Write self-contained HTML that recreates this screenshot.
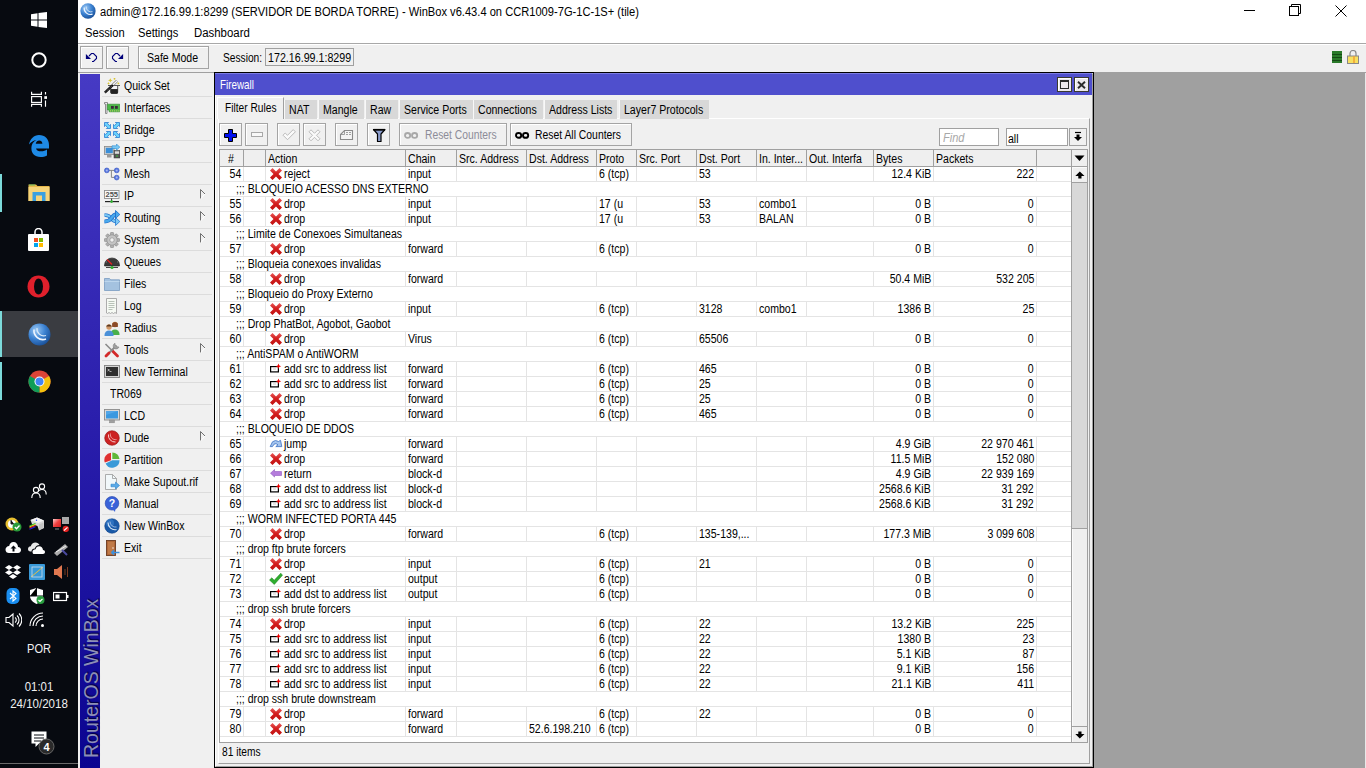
<!DOCTYPE html>
<html><head><meta charset="utf-8">
<style>
*{margin:0;padding:0;box-sizing:border-box}
html,body{width:1366px;height:768px;overflow:hidden;background:#fff;font-family:"Liberation Sans",sans-serif;color:#000}
.a{position:absolute}
.tx{position:absolute;white-space:nowrap;line-height:14px}
.btn{position:absolute;background:#f0f0f0;border:1px solid #a4a4a4;box-shadow:inset 1px 1px 0 #fff}
.it{position:absolute;left:102px;width:110px;height:1px;background:#dcdcdc}
.r{position:absolute;left:220px;width:851px;height:15px;border-bottom:1px solid #e4e4e4}
.c{position:absolute;top:0;height:14px;width:1px;background:#e4e4e4}
.ic{position:absolute;top:0px}
.tab{position:absolute;top:100px;height:19px;background:#d8d8d8;border-left:1px solid #f8f8f8}
.tbtn{position:absolute;top:123px;height:23px;background:#f0f0f0;border:1px solid #a4a4a4;box-shadow:inset 1px 1px 0 #fff}
</style></head><body>

<div class="a" style="left:0;top:0;width:78px;height:768px;background:#070a10"></div>
<svg class="a" style="left:31px;top:12px" width="16" height="16"><path d="M0 2.2L6.5 1.3V7.5H0Z M7.5 1.1L16 0V7.5H7.5Z M0 8.5H6.5V14.7L0 13.8Z M7.5 8.5H16V16L7.5 14.9Z" fill="#fff"/></svg>
<svg class="a" style="left:31px;top:52px" width="16" height="16"><circle cx="8" cy="8" r="6.7" fill="none" stroke="#fff" stroke-width="2"/></svg>
<svg class="a" style="left:26px;top:86px" width="26" height="26"><g fill="none" stroke="#fff" stroke-width="1.15"><path d="M5.6 5.8V8.3H15.4V5.8"/><rect x="5.6" y="10.6" width="9.8" height="5.8"/><path d="M5.6 20.8V18.4H15.4V20.8"/><path d="M19.5 6V8.6M19.5 14.4V20.8"/></g><rect x="18.3" y="10.2" width="2.7" height="2.7" fill="#fff"/></svg>
<svg class="a" style="left:24px;top:130px" width="30" height="30"><path fill-rule="evenodd" fill="#1e8ae6" d="M5 14.5C6 9 10 5 15 5C21 5 25 9 25 15L25 18.4H12C12.5 20.5 14.5 21.3 17 21.3C19.5 21.3 21.5 20.5 23 19.5L23 25.4C21 26.5 19 27 16.5 27C10.5 27 7.4 23 7.4 18.5C7.4 14 9.5 11.2 12.5 10.2C9.5 10.3 7 12 5 14.5Z M11.7 13.7C12.3 11.8 13.6 10.6 15.2 10.6C16.9 10.6 18.2 11.8 18.4 13.7Z"/></svg>
<div class="a" style="left:0;top:174px;width:2px;height:38px;background:#7cdada"></div>
<svg class="a" style="left:28px;top:183px" width="22" height="19" viewBox="0 0 22 19"><path d="M0.5 1.5H8L9.5 3H21.5V18H0.5Z" fill="#e8b84a"/><path d="M0.5 4H21.5V18H0.5Z" fill="#f6d47a"/><path d="M4.5 9H17.5V18H14V12.5H8V18H4.5Z" fill="#3aa0e0"/><path d="M1 2H7" stroke="#6ac060" stroke-width="1"/></svg>
<svg class="a" style="left:27px;top:228px" width="23" height="23" viewBox="0 0 23 23"><path d="M8 6V4A3.5 3.5 0 0 1 15 4V6" fill="none" stroke="#fff" stroke-width="1.5"/><rect x="1" y="6" width="21" height="17" rx="1" fill="#fff"/><rect x="7" y="10" width="4" height="4" fill="#f25022"/><rect x="12" y="10" width="4" height="4" fill="#7fba00"/><rect x="7" y="15" width="4" height="4" fill="#00a4ef"/><rect x="12" y="15" width="4" height="4" fill="#ffb900"/></svg>
<svg class="a" style="left:27px;top:275px" width="23" height="23" viewBox="0 0 23 23"><ellipse cx="11.5" cy="11.5" rx="11" ry="11" fill="#e0202c"/><ellipse cx="11.5" cy="11.5" rx="4.5" ry="8" fill="#070a10"/></svg>
<div class="a" style="left:0;top:311px;width:78px;height:46px;background:#3a3c41"></div>
<div class="a" style="left:0;top:311px;width:2px;height:46px;background:#7cdada"></div>
<svg class="a" style="left:28px;top:323px" width="23" height="23" viewBox="0 0 23 23"><defs><radialGradient id="wb" cx="35%" cy="30%" r="75%"><stop offset="0" stop-color="#9ac8f4"/><stop offset="0.55" stop-color="#3a80d0"/><stop offset="1" stop-color="#1a5098"/></radialGradient></defs><circle cx="11.5" cy="11.5" r="11" fill="url(#wb)"/><path d="M6 6.5A9 9 0 0 0 18 16" stroke="#f0f6ff" stroke-width="1.6" fill="none"/><path d="M9 5A7 7 0 0 0 18 12.5" stroke="#d8e8f8" stroke-width="1.2" fill="none"/></svg>
<div class="a" style="left:0;top:362px;width:2px;height:38px;background:#7cdada"></div>
<svg class="a" style="left:28px;top:370px" width="23" height="23" viewBox="0 0 23 23"><circle cx="11.5" cy="11.5" r="11" fill="#db4437"/><path d="M11.5 11.5L21.03 6 A11 11 0 0 1 11.5 22.5Z" fill="#f4c20d"/><path d="M11.5 11.5L11.5 22.5A11 11 0 0 1 1.97 6Z" fill="#0f9d58"/><circle cx="11.5" cy="11.5" r="5" fill="#fff"/><circle cx="11.5" cy="11.5" r="4" fill="#4285f4"/></svg>
<svg class="a" style="left:31px;top:483px" width="16" height="16"><circle cx="5" cy="7" r="2.6" fill="none" stroke="#fff" stroke-width="1.1"/><path d="M0.8 15C0.8 11.5 2.5 10 5 10C7.5 10 9.2 11.5 9.2 15" fill="none" stroke="#fff" stroke-width="1.1"/><circle cx="11" cy="3.5" r="2.6" fill="none" stroke="#fff" stroke-width="1.1"/><path d="M8 7.5C9 6.7 10 6.5 11 6.5C13.5 6.5 15.2 8 15.2 11.5" fill="none" stroke="#fff" stroke-width="1.1"/></svg>
<svg class="a" style="left:5px;top:516px" width="17" height="16"><circle cx="7" cy="8" r="6.5" fill="#e8c030"/><circle cx="7" cy="8" r="4" fill="#fff"/><path d="M6 4V8H9" stroke="#222" stroke-width="1"/><circle cx="12" cy="11" r="4.5" fill="#2a9a3a"/><path d="M9.8 11L11.5 12.7L14.5 9.5" stroke="#fff" stroke-width="1.3" fill="none"/></svg>
<svg class="a" style="left:29px;top:516px" width="16" height="16"><path d="M1.5 4L8 1.5L15 4.5V12L10 14.5L8.5 10L3 8Z" fill="#d8d8d8"/><path d="M1.5 4L8 1.5L15 4.5L9 7Z" fill="#f4f4f4"/><circle cx="7.5" cy="4.2" r="0.7" fill="#2040f0"/><path d="M10 8.5L14.5 6.5V12L10 14Z" fill="#c4c4c4"/><g stroke-width="1.1"><path d="M0.5 10L6.5 7.5" stroke="#30c030"/><path d="M0.5 11L6.5 8.5" stroke="#e8e020"/><path d="M0.5 12L6.5 9.5" stroke="#e02020"/><path d="M0.5 13.3L6.5 10.8" stroke="#2020e0"/></g></svg>
<svg class="a" style="left:52px;top:516px" width="18" height="16"><defs><linearGradient id="rm" x1="0" y1="0" x2="1" y2="1"><stop offset="0" stop-color="#fbd0d0"/><stop offset="0.5" stop-color="#f04040"/><stop offset="1" stop-color="#d02020"/></linearGradient></defs><rect x="1" y="3" width="8" height="8" fill="url(#rm)"/><path d="M3 13H7" stroke="#888" stroke-width="1"/><rect x="10" y="1" width="7" height="7" fill="#a8a8a8"/><circle cx="13.8" cy="12.9" r="3.2" fill="#e02020"/><path d="M12 14.5L15.5 11.3" stroke="#fff" stroke-width="1.1"/></svg>
<svg class="a" style="left:5px;top:541px" width="16" height="14"><path d="M4 12H13C15 12 16 10.5 16 9C16 7.5 15 6 13 6C13 3 11 1 8.5 1C6 1 4.5 3 4.2 5C2 5 0.5 6.8 0.5 8.7C0.5 10.7 2 12 4 12Z" fill="#fff"/><path d="M8.5 4.5L5.5 7.5H7.5V10.5H9.5V7.5H11.5Z" fill="#070a10"/></svg>
<svg class="a" style="left:28px;top:541px" width="17" height="14"><path d="M2.5 10.5C0.8 10.5 0 9.3 0 8C0 6.5 1.2 5.3 2.8 5.3C3.3 3 5.2 1.5 7.5 1.5C9.3 1.5 10.8 2.5 11.5 4C9 4.2 7.3 5.5 6.8 7.5C5 7.5 3.5 8.8 3.5 10.5Z" fill="#e8e8e8"/><path d="M5.5 13H15C16.2 13 17 12.1 17 11C17 9.8 16.1 9 15 9C14.8 6.8 13.2 5.3 11.2 5.3C9.4 5.3 8 6.5 7.6 8.2C6 8.2 4.5 9.2 4.5 10.8C4.5 12 5 13 5.5 13Z" fill="#fff"/></svg>
<svg class="a" style="left:53px;top:541px" width="16" height="16"><path d="M1 12L12 3L15 6L4 15Z" fill="#aaa"/><path d="M3 11L13 5" stroke="#eee"/><path d="M9 9L14 14" stroke="#4a4aa0" stroke-width="2"/></svg>
<svg class="a" style="left:5px;top:564px" width="16" height="16"><path d="M4 1L8 3.5L4 6L0 3.5Z M12 1L16 3.5L12 6L8 3.5Z M4 6L8 8.5L4 11L0 8.5Z M12 6L16 8.5L12 11L8 8.5Z M8 10L12 12.5L8 15L4 12.5Z" fill="#fff"/></svg>
<svg class="a" style="left:29px;top:564px" width="16" height="16"><rect x="0" y="0" width="16" height="16" rx="1" fill="#3a9ad8"/><path d="M2 13L14 3" stroke="#e8c040" stroke-width="1"/><rect x="3" y="3" width="10" height="10" fill="none" stroke="#cde" stroke-width="0.8"/></svg>
<svg class="a" style="left:53px;top:564px" width="16" height="16"><path d="M1 5H4L9 1V15L4 11H1Z" fill="#e07850"/><path d="M12 5V11M14.5 3V13" stroke="#7a3a20" stroke-width="1"/></svg>
<svg class="a" style="left:5px;top:588px" width="16" height="16"><rect x="1.5" y="0" width="13" height="16" rx="5" fill="#1a8ef0"/><path d="M5 5L11 10.5L8 13V3L11 5.5L5 11" fill="none" stroke="#fff" stroke-width="1.1"/></svg>
<svg class="a" style="left:29px;top:588px" width="16" height="16"><path d="M1 2L7.5 0L14 2V8C14 11.5 11 14.5 7.5 16C4 14.5 1 11.5 1 8Z" fill="#fff"/><path d="M7.5 0V8H1M7.5 8H14" stroke="#070a10" stroke-width="1"/><circle cx="11.5" cy="12" r="4" fill="#2aa040"/><path d="M9.5 12L11 13.5L13.5 10.8" stroke="#fff" stroke-width="1.2" fill="none"/></svg>
<svg class="a" style="left:53px;top:590px" width="16" height="12"><rect x="0.5" y="2.5" width="13" height="8" fill="none" stroke="#fff" stroke-width="1.2"/><rect x="2.5" y="4.5" width="4" height="4" fill="#fff"/><rect x="14" y="5" width="1.5" height="3" fill="#fff"/></svg>
<svg class="a" style="left:5px;top:612px" width="17" height="16"><path d="M1 5.5H4L8 2V14L4 10.5H1Z" fill="none" stroke="#fff" stroke-width="1.1"/><path d="M10 5.5A3 3 0 0 1 10 10.5M12 3.5A6 6 0 0 1 12 12.5M14 1.5A9 9 0 0 1 14 14.5" fill="none" stroke="#fff" stroke-width="1.1"/></svg>
<svg class="a" style="left:29px;top:612px" width="16" height="16"><path d="M1 14A13 13 0 0 1 14 1M4 14A10 10 0 0 1 14 4M7 14A7 7 0 0 1 14 7" fill="none" stroke="#fff" stroke-width="1.1"/><circle cx="13.5" cy="13.5" r="1.5" fill="#fff"/></svg>
<div class="tx" style="left:0;width:78px;text-align:center;top:642px;font-size:12px;color:#f0f0f0;transform:scaleX(0.92)">POR</div>
<div class="tx" style="left:0;width:78px;text-align:center;top:680px;font-size:12px;color:#f0f0f0;transform:scaleX(0.95)">01:01</div>
<div class="tx" style="left:0;width:78px;text-align:center;top:697px;font-size:12px;color:#f0f0f0;transform:scaleX(0.96)">24/10/2018</div>
<svg class="a" style="left:30px;top:730px" width="26" height="26"><path d="M1.5 1.5H16.5V13.5H9L5.5 17V13.5H1.5Z" fill="#fff"/><path d="M4 5H14M4 8H14M4 11H11" stroke="#070a10" stroke-width="1"/><circle cx="16.5" cy="16.5" r="7.5" fill="#2a2a2a" stroke="#666" stroke-width="1"/><text x="16.5" y="21" font-size="11" font-weight="bold" text-anchor="middle" fill="#fff" font-family="Liberation Sans">4</text></svg>
<div class="a" style="left:0;top:763px;width:78px;height:1px;background:#6a6a6a"></div>
<div class="a" style="left:78px;top:0;width:1288px;height:43px;background:#fff"></div>
<div class="a" style="left:78px;top:43px;width:1288px;height:1px;background:#a8a8a8"></div>
<div class="a" style="left:78px;top:44px;width:1288px;height:28px;background:#f0f0f0;border-top:1px solid #fff"></div>
<svg class="a" style="left:80px;top:3px" width="16" height="16" viewBox="0 0 23 23"><circle cx="11.5" cy="11.5" r="11" fill="url(#wb)"/><path d="M6 6.5A9 9 0 0 0 18 16" stroke="#f0f6ff" stroke-width="1.6" fill="none"/><path d="M9 5A7 7 0 0 0 18 12.5" stroke="#d8e8f8" stroke-width="1.2" fill="none"/></svg>
<div class="tx" style="left:100px;top:5px;font-size:12px;transform:scaleX(0.927);transform-origin:0 0;">admin@172.16.99.1:8299 (SERVIDOR DE BORDA TORRE) - WinBox v6.43.4 on CCR1009-7G-1C-1S+ (tile)</div>
<div class="tx" style="left:85px;top:26px;font-size:12px;transform:scaleX(0.93);transform-origin:0 0;">Session</div>
<div class="tx" style="left:138px;top:26px;font-size:12px;transform:scaleX(0.93);transform-origin:0 0;">Settings</div>
<div class="tx" style="left:194px;top:26px;font-size:12px;transform:scaleX(0.95);transform-origin:0 0;">Dashboard</div>
<div class="a" style="left:1244px;top:10px;width:11px;height:1px;background:#000"></div>
<svg class="a" style="left:1289px;top:4px" width="12" height="12"><path d="M2.5 2.5V0.5H11.5V9.5H9.5" fill="none" stroke="#000"/><rect x="0.5" y="2.5" width="9" height="9" fill="none" stroke="#000"/></svg>
<svg class="a" style="left:1335px;top:5px" width="12" height="12"><path d="M0.5 0.5L11.5 11.5M11.5 0.5L0.5 11.5" stroke="#000" stroke-width="1"/></svg>
<div class="btn" style="left:80px;top:46px;width:23px;height:23px"></div>
<div class="btn" style="left:106px;top:46px;width:23px;height:23px"></div>
<svg class="a" style="left:80px;top:46px" width="50" height="23"><g transform="translate(-80 -46)"><path d="M89 56L91.5 53.5H93.5L96.5 56.5V58.5L93.5 61.5H92" fill="none" stroke="#00007a" stroke-width="1.1"/><path d="M85.9 53.9V58.9H91Z" fill="#00007a"/><path d="M120 56L117.5 53.5H115.5L112.5 56.5V58.5L115.5 61.5H117" fill="none" stroke="#00007a" stroke-width="1.1"/><path d="M123.1 53.9V58.9H118Z" fill="#00007a"/></g></svg>
<div class="btn" style="left:138px;top:46px;width:71px;height:23px"></div>
<div class="tx" style="left:147px;top:51px;font-size:12px;transform:scaleX(0.88);transform-origin:0 0;">Safe Mode</div>
<div class="tx" style="left:223px;top:51px;font-size:12px;transform:scaleX(0.85);transform-origin:0 0;">Session:</div>
<div class="a" style="left:265px;top:48px;width:89px;height:18px;background:#f0f0f0;border:1px solid #a0a0a0"></div>
<div class="tx" style="left:268px;top:51px;font-size:12px;transform:scaleX(0.89);transform-origin:0 0;">172.16.99.1:8299</div>
<svg class="a" style="left:1332px;top:51px" width="10" height="12"><rect x="0" y="0" width="10" height="12" fill="#2a7a2a"/><path d="M0 3.5H10M0 6.5H10M0 9.5H10" stroke="#154a15"/></svg>
<svg class="a" style="left:1347px;top:50px" width="12" height="14"><path d="M3 6V3.5A3 3 0 0 1 9 3.5V6" fill="none" stroke="#888" stroke-width="1.2"/><rect x="0.5" y="6" width="11" height="7.5" fill="#f8e060" stroke="#888"/><path d="M7 6V13" stroke="#f0a030" stroke-width="1.5"/></svg>
<div class="a" style="left:78px;top:72px;width:1288px;height:1px;background:#a0a0a0"></div>
<div class="a" style="left:78px;top:73px;width:136px;height:695px;background:#f0f0f0"></div>
<div class="a" style="left:80px;top:74px;width:20px;height:694px;background:linear-gradient(#463ac4,#2a1eac 50%,#0a0490)"></div>
<div class="tx" style="left:82px;top:758px;transform-origin:0 0;transform:rotate(-90deg);font-size:19.5px;line-height:18px;color:#8c8eb8;text-shadow:1px 1px 1px #000040">RouterOS WinBox</div>
<div class="it" style="top:96px"></div>
<svg class="a" style="left:104px;top:78px" width="16" height="16" viewBox="0 0 16 16"><path d="M6.6 8H13.9V14.5Q13.9 15.7 12.5 15.7H8Q6.6 15.7 6.6 14.5Z" fill="#3c3c3c"/><path d="M6.6 11.5H13.9V14.5Q13.9 15.7 12.5 15.7H8Q6.6 15.7 6.6 14.5Z" fill="#222"/><rect x="6.8" y="8" width="7" height="3" fill="#f4f4f8"/><path d="M6.8 8V14.5M13.7 8V14.5" stroke="#333" stroke-width="0.8"/><path d="M4 7.5H16" stroke="#555" stroke-width="1"/><path d="M0.8 14.6L9 6.8" stroke="#111" stroke-width="2.4"/><path d="M9 6.8L13 2.9" stroke="#777" stroke-width="2.6"/><path d="M9 6.8L13 2.9" stroke="#fafafa" stroke-width="1.4"/><path d="M1.5 14L8.5 7.3" stroke="#bbb" stroke-width="0.6" stroke-dasharray="1 1"/><path d="M6.3 0.3L7 1.8L8.6 2.4L7 3L6.3 4.6L5.6 3L4 2.4L5.6 1.8Z" fill="#d8c432"/><path d="M4.5 4L5 5L6 5.3L5 5.7L4.5 6.7L4 5.7L3 5.3L4 5Z" fill="#d8c432"/><circle cx="10.5" cy="0.8" r="0.9" fill="#d8c432"/><circle cx="14.4" cy="5.4" r="0.9" fill="#d8c432"/></svg>
<div class="tx" style="left:124px;top:79px;font-size:12px;transform:scaleX(0.88);transform-origin:0 0;">Quick Set</div>
<div class="it" style="top:118px"></div>
<svg class="a" style="left:104px;top:100px" width="16" height="16" viewBox="0 0 16 16"><path d="M0.5 2.5H3.5V4H3V13.5H1.5V4H0.5Z" fill="#f0f0f4" stroke="#777" stroke-width="0.8"/><path d="M3.5 4.2H15.8V11.8H5.2V10H3.5Z" fill="#4cb848" stroke="#2a8a2a" stroke-width="0.6"/><rect x="7" y="6" width="2.8" height="2.8" fill="#3a2a3a"/><rect x="11" y="6" width="2.8" height="2.8" fill="#3a2a3a"/><path d="M6 10.9H15.5" stroke="#e8d070" stroke-width="1" stroke-dasharray="0.9 1.2"/></svg>
<div class="tx" style="left:124px;top:101px;font-size:12px;transform:scaleX(0.88);transform-origin:0 0;">Interfaces</div>
<div class="it" style="top:140px"></div>
<svg class="a" style="left:104px;top:122px" width="16" height="16" viewBox="0 0 16 16"><g fill="#6cd4fc" stroke="#2a7ad0" stroke-width="0.8" stroke-linejoin="round"><path d="M0.5 0.5H4.6L3.5 1.6L5.4 3.5L6.5 2.4V6.5H2.4L3.5 5.4L1.6 3.5L0.5 4.6Z"/><path transform="translate(16 0) scale(-1 1)" d="M0.5 0.5H4.6L3.5 1.6L5.4 3.5L6.5 2.4V6.5H2.4L3.5 5.4L1.6 3.5L0.5 4.6Z"/><path transform="translate(0 16) scale(1 -1)" d="M0.5 0.5H4.6L3.5 1.6L5.4 3.5L6.5 2.4V6.5H2.4L3.5 5.4L1.6 3.5L0.5 4.6Z"/><path transform="translate(16 16) scale(-1 -1)" d="M0.5 0.5H4.6L3.5 1.6L5.4 3.5L6.5 2.4V6.5H2.4L3.5 5.4L1.6 3.5L0.5 4.6Z"/></g></svg>
<div class="tx" style="left:124px;top:123px;font-size:12px;transform:scaleX(0.88);transform-origin:0 0;">Bridge</div>
<div class="it" style="top:162px"></div>
<svg class="a" style="left:104px;top:144px" width="16" height="16" viewBox="0 0 16 16"><rect x="0.5" y="2.5" width="9.5" height="8" fill="#d0d0d0" stroke="#888" stroke-width="0.8"/><rect x="1.8" y="3.8" width="7" height="5.4" fill="#3a8ed8"/><rect x="3" y="11" width="4.5" height="2.5" fill="#999"/><rect x="10" y="6.5" width="6" height="7.5" fill="#555" stroke="#333" stroke-width="0.5"/><rect x="10.8" y="7.3" width="4.4" height="2.5" fill="#ddd"/><circle cx="13" cy="12" r="0.8" fill="#3c3"/><path d="M8 1.8H12.5V0L15.8 3.1L12.5 6.2V4.5H8Z" fill="#7ac8f4" stroke="#2a8ad0" stroke-width="0.6"/></svg>
<div class="tx" style="left:124px;top:145px;font-size:12px;transform:scaleX(0.88);transform-origin:0 0;">PPP</div>
<div class="it" style="top:184px"></div>
<svg class="a" style="left:104px;top:166px" width="16" height="16" viewBox="0 0 16 16"><path d="M3 4.4H12.5M7.4 4.4V11.4H12.5" stroke="#888" stroke-width="1" fill="none"/><circle cx="2.8" cy="4.4" r="2.4" fill="#5a78e0" stroke="#3050c0" stroke-width="0.6"/><circle cx="12.7" cy="4.4" r="2.4" fill="#5a78e0" stroke="#3050c0" stroke-width="0.6"/><circle cx="12.7" cy="11.6" r="2.4" fill="#5a78e0" stroke="#3050c0" stroke-width="0.6"/><circle cx="2.8" cy="4.4" r="1" fill="#a8b8f0"/><circle cx="12.7" cy="4.4" r="1" fill="#a8b8f0"/><circle cx="12.7" cy="11.6" r="1" fill="#a8b8f0"/></svg>
<div class="tx" style="left:124px;top:167px;font-size:12px;transform:scaleX(0.88);transform-origin:0 0;">Mesh</div>
<div class="it" style="top:206px"></div>
<svg class="a" style="left:104px;top:188px" width="16" height="16" viewBox="0 0 16 16"><rect x="0.5" y="2.5" width="14.5" height="8" fill="#fafafa" stroke="#909090" stroke-width="0.9"/><text x="7.8" y="9.3" font-size="7.5" font-weight="bold" text-anchor="middle" fill="#505050" font-family="Liberation Sans">255</text><path d="M7.6 10.5V13.5" stroke="#333"/><path d="M1 13.6H15" stroke="#222" stroke-width="1.2"/><circle cx="7.6" cy="13.6" r="1.4" fill="#30b030"/></svg>
<div class="tx" style="left:124px;top:189px;font-size:12px;transform:scaleX(0.88);transform-origin:0 0;">IP</div>
<svg class="a" style="left:200px;top:189px" width="7" height="11"><path d="M0.5 0.5V10" stroke="#707070"/><path d="M0.5 0.5L5 5" stroke="#707070"/><path d="M5 5L0.5 10" stroke="#fff"/></svg>
<div class="it" style="top:228px"></div>
<svg class="a" style="left:104px;top:210px" width="16" height="16" viewBox="0 0 16 16"><path d="M0.5 5C4 5 5.5 5.5 7.5 8.5C9.5 11.5 10.5 11.5 12 11.5" stroke="#2a7ad0" stroke-width="3.6" fill="none"/><path d="M0.5 5C4 5 5.5 5.5 7.5 8.5C9.5 11.5 10.5 11.5 12 11.5" stroke="#7cc8f4" stroke-width="2.2" fill="none"/><path d="M11.5 7.5L15.8 11.5L11.5 15.5Z" fill="#7cc8f4" stroke="#2a7ad0" stroke-width="0.8" stroke-linejoin="round"/><path d="M0.5 11.5C4 11.5 5.5 11 7.5 8C9.5 5 10.5 4.5 12 4.5" stroke="#1a6ac8" stroke-width="3.8" fill="none"/><path d="M0.5 11.5C4 11.5 5.5 11 7.5 8C9.5 5 10.5 4.5 12 4.5" stroke="#4aa8ec" stroke-width="2.4" fill="none"/><path d="M11.5 0.5L15.8 4.5L11.5 8.5Z" fill="#4aa8ec" stroke="#1a6ac8" stroke-width="0.8" stroke-linejoin="round"/></svg>
<div class="tx" style="left:124px;top:211px;font-size:12px;transform:scaleX(0.88);transform-origin:0 0;">Routing</div>
<svg class="a" style="left:200px;top:211px" width="7" height="11"><path d="M0.5 0.5V10" stroke="#707070"/><path d="M0.5 0.5L5 5" stroke="#707070"/><path d="M5 5L0.5 10" stroke="#fff"/></svg>
<div class="it" style="top:250px"></div>
<svg class="a" style="left:104px;top:232px" width="16" height="16" viewBox="0 0 16 16"><g transform="translate(8 8)"><g fill="#b0b0b0" stroke="#888" stroke-width="0.6"><rect x="-1.6" y="-7.5" width="3.2" height="15" rx="0.6"/><rect x="-1.6" y="-7.5" width="3.2" height="15" rx="0.6" transform="rotate(45)"/><rect x="-1.6" y="-7.5" width="3.2" height="15" rx="0.6" transform="rotate(90)"/><rect x="-1.6" y="-7.5" width="3.2" height="15" rx="0.6" transform="rotate(135)"/></g><circle r="5.2" fill="#c4c4c4" stroke="#8a8a8a" stroke-width="0.6"/><circle r="2.2" fill="#f0f0f0" stroke="#888" stroke-width="0.6"/></g></svg>
<div class="tx" style="left:124px;top:233px;font-size:12px;transform:scaleX(0.88);transform-origin:0 0;">System</div>
<svg class="a" style="left:200px;top:233px" width="7" height="11"><path d="M0.5 0.5V10" stroke="#707070"/><path d="M0.5 0.5L5 5" stroke="#707070"/><path d="M5 5L0.5 10" stroke="#fff"/></svg>
<div class="it" style="top:272px"></div>
<svg class="a" style="left:104px;top:254px" width="16" height="16" viewBox="0 0 16 16"><path d="M0.5 11A7.5 7 0 0 1 15.5 11V12H0.5Z" fill="#3a3a3a" stroke="#222" stroke-width="0.6"/><path d="M3 5.5L8 10.5" stroke="#e82020" stroke-width="1.3"/><path d="M2 8H3M8 3.5V4.5M13 8H14" stroke="#999" stroke-width="0.7"/><path d="M2 13.5H14" stroke="#444" stroke-width="1"/><circle cx="8" cy="13.5" r="1.6" fill="#30b030"/></svg>
<div class="tx" style="left:124px;top:255px;font-size:12px;transform:scaleX(0.88);transform-origin:0 0;">Queues</div>
<div class="it" style="top:294px"></div>
<svg class="a" style="left:104px;top:276px" width="16" height="16" viewBox="0 0 16 16"><path d="M0.5 2.5H5.5L6.8 3.8H15.5V14.5H0.5Z" fill="#a4c2e0" stroke="#7a9cc0" stroke-width="0.8"/><path d="M0.5 5.5H15.5" stroke="#c4daf0" stroke-width="0.8"/></svg>
<div class="tx" style="left:124px;top:277px;font-size:12px;transform:scaleX(0.88);transform-origin:0 0;">Files</div>
<div class="it" style="top:316px"></div>
<svg class="a" style="left:104px;top:298px" width="16" height="16" viewBox="0 0 16 16"><path d="M2.5 0.5H12.5V15.5L11 14.5L9.5 15.5L8 14.5L6.5 15.5L5 14.5L3.5 15.5L2.5 15Z" fill="#f6faf4" stroke="#999" stroke-width="0.8"/><path d="M4.5 3.5H10.5M4.5 5.5H10.5M4.5 7.5H10.5M4.5 9.5H10.5M4.5 11.5H8.5" stroke="#a8b4a8" stroke-width="0.8"/></svg>
<div class="tx" style="left:124px;top:299px;font-size:12px;transform:scaleX(0.88);transform-origin:0 0;">Log</div>
<div class="it" style="top:338px"></div>
<svg class="a" style="left:104px;top:320px" width="16" height="16" viewBox="0 0 16 16"><circle cx="11" cy="4.5" r="2.8" fill="#c08850"/><path d="M8.2 3.5Q11 0.5 13.8 3.5V7H8.2Z" fill="#8a4a28"/><path d="M6.5 14A4.5 4.5 0 0 1 15.5 14V15H6.5Z" fill="#4ab04a"/><circle cx="5" cy="7" r="2.7" fill="#d09868"/><path d="M2.3 6Q5 3 7.7 6V6.5H2.3Z" fill="#5a3820"/><path d="M0.5 15A4.5 4.5 0 0 1 9.5 15V16H0.5Z" fill="#4a90d8"/></svg>
<div class="tx" style="left:124px;top:321px;font-size:12px;transform:scaleX(0.88);transform-origin:0 0;">Radius</div>
<div class="it" style="top:360px"></div>
<svg class="a" style="left:104px;top:342px" width="16" height="16" viewBox="0 0 16 16"><path d="M1.5 2L13.5 14" stroke="#8a8a8a" stroke-width="1.6"/><path d="M8.5 9L13.5 14" stroke="#d42a2a" stroke-width="2.8" stroke-linecap="round"/><path d="M12.5 3.5L2 14" stroke="#8a8a8a" stroke-width="1.8"/><path d="M2 14L5 11" stroke="#d42a2a" stroke-width="2.8" stroke-linecap="round"/><path d="M11 1.2A3 3 0 1 0 15 5L13.2 4.8L11.2 2.8Z" fill="#a0a0a0" stroke="#777" stroke-width="0.5"/></svg>
<div class="tx" style="left:124px;top:343px;font-size:12px;transform:scaleX(0.88);transform-origin:0 0;">Tools</div>
<svg class="a" style="left:200px;top:343px" width="7" height="11"><path d="M0.5 0.5V10" stroke="#707070"/><path d="M0.5 0.5L5 5" stroke="#707070"/><path d="M5 5L0.5 10" stroke="#fff"/></svg>
<div class="it" style="top:382px"></div>
<svg class="a" style="left:104px;top:364px" width="16" height="16" viewBox="0 0 16 16"><rect x="0.5" y="1.5" width="15" height="12" fill="#d4d4d4" stroke="#808080" stroke-width="0.9"/><rect x="2" y="3" width="12" height="9" fill="#2e2e2e"/><path d="M3.5 5L5.5 6L3.5 7M5.5 7.5H7.5" stroke="#e0e0e0" stroke-width="0.7" fill="none"/></svg>
<div class="tx" style="left:124px;top:365px;font-size:12px;transform:scaleX(0.88);transform-origin:0 0;">New Terminal</div>
<div class="it" style="top:404px"></div>
<div class="tx" style="left:110px;top:387px;font-size:12px;transform:scaleX(0.88);transform-origin:0 0;">TR069</div>
<div class="it" style="top:426px"></div>
<svg class="a" style="left:104px;top:408px" width="16" height="16" viewBox="0 0 16 16"><rect x="0.5" y="1.5" width="15" height="10.5" fill="#d8d8d8" stroke="#8a8a8a" stroke-width="0.9"/><rect x="2" y="3" width="12" height="7.5" fill="#3a98e0"/><path d="M2 3H14L2 7Z" fill="#6ab4f0" opacity="0.5"/><rect x="5.5" y="12" width="5" height="2.8" fill="#a0a0a0" stroke="#888" stroke-width="0.5"/></svg>
<div class="tx" style="left:124px;top:409px;font-size:12px;transform:scaleX(0.88);transform-origin:0 0;">LCD</div>
<div class="it" style="top:448px"></div>
<svg class="a" style="left:104px;top:430px" width="16" height="16" viewBox="0 0 16 16"><circle cx="8" cy="8" r="7.3" fill="#cc2222" stroke="#901010" stroke-width="0.6"/><path d="M4.5 4.5A6.5 6.5 0 0 0 11.5 12" stroke="#f8d0d0" stroke-width="1" fill="none"/><path d="M6.5 3.5A5 5 0 0 0 12.5 9.5" stroke="#f0b0b0" stroke-width="0.8" fill="none"/></svg>
<div class="tx" style="left:124px;top:431px;font-size:12px;transform:scaleX(0.88);transform-origin:0 0;">Dude</div>
<svg class="a" style="left:200px;top:431px" width="7" height="11"><path d="M0.5 0.5V10" stroke="#707070"/><path d="M0.5 0.5L5 5" stroke="#707070"/><path d="M5 5L0.5 10" stroke="#fff"/></svg>
<div class="it" style="top:470px"></div>
<svg class="a" style="left:104px;top:452px" width="16" height="16" viewBox="0 0 16 16"><path d="M7 8.2L7 0.8A7.2 7.2 0 0 0 0.8 10.5Z" fill="#e03030"/><path d="M8.3 7V0.5A7.2 7.2 0 0 1 15.5 7Z" fill="#60b838"/><path d="M8.3 8.3H15.5A7.3 7.3 0 0 1 1.6 11.6Z" fill="#3a9ad8"/></svg>
<div class="tx" style="left:124px;top:453px;font-size:12px;transform:scaleX(0.88);transform-origin:0 0;">Partition</div>
<div class="it" style="top:492px"></div>
<svg class="a" style="left:104px;top:474px" width="16" height="16" viewBox="0 0 16 16"><path d="M1.5 0.5H8.5L12.5 4.5V15.5H1.5Z" fill="#f2f8fa" stroke="#999" stroke-width="0.8"/><path d="M8.5 0.5V4.5H12.5" fill="none" stroke="#999" stroke-width="0.8"/><path d="M7 10.2H11.5V8L15.5 11.5L11.5 15V12.8H7Z" fill="#5aaae8" stroke="#2a80c8" stroke-width="0.6"/></svg>
<div class="tx" style="left:124px;top:475px;font-size:12px;transform:scaleX(0.88);transform-origin:0 0;">Make Supout.rif</div>
<div class="it" style="top:514px"></div>
<svg class="a" style="left:104px;top:496px" width="16" height="16" viewBox="0 0 16 16"><circle cx="8" cy="7.3" r="6.8" fill="#3a62d8" stroke="#2040a8" stroke-width="0.6"/><path d="M8.5 13L11 16L11.5 12Z" fill="#3a62d8"/><text x="8" y="11.3" font-size="10.5" font-weight="bold" text-anchor="middle" fill="#fff" font-family="Liberation Sans">?</text></svg>
<div class="tx" style="left:124px;top:497px;font-size:12px;transform:scaleX(0.88);transform-origin:0 0;">Manual</div>
<div class="it" style="top:536px"></div>
<svg class="a" style="left:104px;top:518px" width="16" height="16" viewBox="0 0 16 16"><circle cx="8" cy="8" r="7.3" fill="#1a5aa8" stroke="#0a3a80" stroke-width="0.5"/><circle cx="6" cy="5" r="4" fill="#3a80d0" opacity="0.6"/><path d="M4 4.5A7 7 0 0 0 12.5 11.5" stroke="#d8e8f8" stroke-width="1.1" fill="none"/><path d="M6 3.5A5.5 5.5 0 0 0 12.5 9" stroke="#b0c8e8" stroke-width="0.8" fill="none"/></svg>
<div class="tx" style="left:124px;top:519px;font-size:12px;transform:scaleX(0.88);transform-origin:0 0;">New WinBox</div>
<div class="it" style="top:558px"></div>
<svg class="a" style="left:104px;top:540px" width="16" height="16" viewBox="0 0 16 16"><rect x="2.5" y="0.5" width="9" height="15" fill="#b06838" stroke="#6a3a20" stroke-width="0.9"/><rect x="4" y="2" width="6" height="12" fill="#c07a48"/><circle cx="9" cy="8" r="0.7" fill="#fff"/><path d="M7.5 12.5H15.5M7.5 12.5L10 10.3M7.5 12.5L10 14.7" stroke="#3a90e0" stroke-width="1.5" fill="none"/></svg>
<div class="tx" style="left:124px;top:541px;font-size:12px;transform:scaleX(0.88);transform-origin:0 0;">Exit</div>
<div class="a" style="left:214px;top:73px;width:1152px;height:695px;background:#a0a0a0"></div>
<div class="a" style="left:1365px;top:73px;width:1px;height:695px;background:#e8e8e8"></div>
<div class="a" style="left:214px;top:72px;width:880px;height:696px;background:#f0f0f0;border:1px solid #000;border-bottom-width:2px"></div>
<div class="a" style="left:215px;top:73px;width:878px;height:694px;border:1px solid #fff;border-right-color:#a0a0a0;border-bottom-color:#a0a0a0"></div>
<div class="a" style="left:215px;top:73px;width:877px;height:22px;background:#4f4fcd"></div>
<div class="tx" style="left:220px;top:78px;font-size:12.8px;color:#fff;transform:scaleX(0.77);transform-origin:0 0;">Firewall</div>
<div class="a" style="left:215px;top:73px;width:877px;height:1px;background:#7c7ce4"></div>
<div class="a" style="left:1057px;top:77px;width:15px;height:15px;background:#ece8ec;border:1px solid #3a3a30;box-shadow:inset 1px 1px 0 #fff"></div>
<div class="a" style="left:1060px;top:80px;width:9px;height:9px;border:1px solid #2a2a2a;border-top-width:2px"></div>
<div class="a" style="left:1074px;top:77px;width:15px;height:15px;background:#ece8ec;border:1px solid #3a3a30;box-shadow:inset 1px 1px 0 #fff"></div>
<svg class="a" style="left:1077px;top:81px" width="9" height="8"><path d="M1 0.8L8 7.2M8 0.8L1 7.2" stroke="#2a2a2a" stroke-width="1.9"/></svg>
<div class="a" style="left:218px;top:118px;width:872px;height:646px;border:1px solid #fff;border-right-color:#a0a0a0;border-bottom-color:#a0a0a0"></div>
<div class="tab" style="left:284px;width:33px"></div>
<div class="tx" style="left:289px;top:103px;font-size:12px;transform:scaleX(0.88);transform-origin:0 0;">NAT</div>
<div class="tab" style="left:318px;width:46px"></div>
<div class="tx" style="left:323px;top:103px;font-size:12px;transform:scaleX(0.88);transform-origin:0 0;">Mangle</div>
<div class="tab" style="left:365px;width:33px"></div>
<div class="tx" style="left:370px;top:103px;font-size:12px;transform:scaleX(0.88);transform-origin:0 0;">Raw</div>
<div class="tab" style="left:399px;width:74px"></div>
<div class="tx" style="left:404px;top:103px;font-size:12px;transform:scaleX(0.88);transform-origin:0 0;">Service Ports</div>
<div class="tab" style="left:473px;width:70px"></div>
<div class="tx" style="left:478px;top:103px;font-size:12px;transform:scaleX(0.88);transform-origin:0 0;">Connections</div>
<div class="tab" style="left:544px;width:73px"></div>
<div class="tx" style="left:549px;top:103px;font-size:12px;transform:scaleX(0.88);transform-origin:0 0;">Address Lists</div>
<div class="tab" style="left:619px;width:90px"></div>
<div class="tx" style="left:624px;top:103px;font-size:12px;transform:scaleX(0.88);transform-origin:0 0;">Layer7 Protocols</div>
<div class="a" style="left:217px;top:97px;width:67px;height:22px;background:#f0f0f0;border:1px solid #fff;border-right-color:#a0a0a0;border-bottom:none"></div>
<div class="tx" style="left:225px;top:101px;font-size:12px;transform:scaleX(0.85);transform-origin:0 0;">Filter Rules</div>
<div class="tbtn" style="left:219px;width:23px"></div>
<div class="tbtn" style="left:245px;width:23px"></div>
<div class="tbtn" style="left:277px;width:23px"></div>
<div class="tbtn" style="left:303px;width:23px"></div>
<div class="tbtn" style="left:335px;width:23px"></div>
<div class="tbtn" style="left:367px;width:23px"></div>
<svg class="a" style="left:223px;top:128px" width="15" height="15"><path d="M5.5 1.5H9.5V5.5H13.5V9.5H9.5V13.5H5.5V9.5H1.5V5.5H5.5Z" fill="#0010f0" stroke="#000" stroke-width="1"/></svg>
<div class="a" style="left:251px;top:132px;width:12px;height:5px;border:1px solid #a8a8a8;background:#f8f8f8"></div>
<svg class="a" style="left:276px;top:122px" width="120" height="26"><path d="M7 13.2L9.2 11L11.5 13.3L17.2 7.6L19.4 9.8L11.5 17.7Z" fill="#fafafa" stroke="#b4b4b4" stroke-width="0.9" stroke-linejoin="miter"/><path d="M33 9.8L35 7.8L38.5 11.3L42 7.8L44 9.8L40.5 13.3L44 16.8L42 18.8L38.5 15.3L35 18.8L33 16.8L36.5 13.3Z" fill="#fafafa" stroke="#b4b4b4" stroke-width="0.9"/><path d="M68.5 8.5H76.5V17.5H64.5V12.5Z" fill="#f4f4f4" stroke="#8a8a8a" stroke-width="1.1"/><path d="M64.5 12.5H68.5V8.5" fill="none" stroke="#8a8a8a" stroke-width="0.8"/><path d="M70 10.5H75M70 12.5H75" stroke="#8a8a8a" stroke-width="0.8" stroke-dasharray="2 1"/><path d="M97.5 7.5H109L105 12V19.5H101.5V12Z" fill="#8a9ccc" stroke="#000" stroke-width="1.2" stroke-linejoin="round"/><path d="M97.5 7.8H109" stroke="#000" stroke-width="1.8"/></svg>
<div class="tbtn" style="left:399px;width:108px"></div>
<svg class="a" style="left:404px;top:131px" width="15" height="9"><ellipse cx="3.6" cy="4.4" rx="2.6" ry="2.4" fill="none" stroke="#a8a8a8" stroke-width="1.8"/><ellipse cx="10.6" cy="4.4" rx="2.6" ry="2.4" fill="none" stroke="#a8a8a8" stroke-width="1.8"/></svg>
<div class="tx" style="left:425px;top:128px;font-size:12px;color:#8c8c98;transform:scaleX(0.86);transform-origin:0 0;">Reset Counters</div>
<div class="tbtn" style="left:510px;width:122px"></div>
<svg class="a" style="left:515px;top:131px" width="15" height="9"><ellipse cx="3.6" cy="4.4" rx="2.6" ry="2.4" fill="none" stroke="#000" stroke-width="1.9"/><ellipse cx="10.6" cy="4.4" rx="2.6" ry="2.4" fill="none" stroke="#000" stroke-width="1.9"/></svg>
<div class="tx" style="left:535px;top:128px;font-size:12px;transform:scaleX(0.865);transform-origin:0 0;">Reset All Counters</div>
<div class="a" style="left:939px;top:128px;width:60px;height:18px;background:#fff;border:1px solid #a0a0a0"></div>
<div class="tx" style="left:943px;top:131px;font-size:12px;color:#a8a8a8;transform:scaleX(0.92);transform-origin:0 0;font-style:italic">Find</div>
<div class="a" style="left:1006px;top:128px;width:62px;height:18px;background:#fff;border:1px solid #a0a0a0"></div>
<div class="tx" style="left:1008px;top:132px;font-size:12px;transform:scaleX(0.88);transform-origin:0 0;">all</div>
<div class="a" style="left:1069px;top:128px;width:18px;height:18px;background:#f0f0f0;border:1px solid #a0a0a0"></div>
<svg class="a" style="left:1072px;top:131px" width="12" height="12"><path d="M3 1.5H9" stroke="#000" stroke-width="1.2"/><path d="M4.5 3.5H7.5V6H10L6 10L2 6H4.5Z" fill="#000"/></svg>
<div class="a" style="left:219px;top:149px;width:869px;height:594px;background:#fff;border:1px solid #a0a0a0"></div>
<div class="a" style="left:220px;top:150px;width:851px;height:17px;background:#efefef;border-bottom:1px solid #a0a0a0"></div>
<div class="tx" style="left:228px;top:152px;font-size:12px;transform:scaleX(0.88);transform-origin:0 0;">#</div>
<div class="a" style="left:243px;top:150px;width:1px;height:16px;background:#a0a0a0"></div>
<div class="a" style="left:265px;top:150px;width:1px;height:16px;background:#a0a0a0"></div>
<div class="tx" style="left:268px;top:152px;font-size:12px;transform:scaleX(0.88);transform-origin:0 0;">Action</div>
<div class="a" style="left:405px;top:150px;width:1px;height:16px;background:#a0a0a0"></div>
<div class="tx" style="left:408px;top:152px;font-size:12px;transform:scaleX(0.88);transform-origin:0 0;">Chain</div>
<div class="a" style="left:456px;top:150px;width:1px;height:16px;background:#a0a0a0"></div>
<div class="tx" style="left:459px;top:152px;font-size:12px;transform:scaleX(0.88);transform-origin:0 0;">Src. Address</div>
<div class="a" style="left:526px;top:150px;width:1px;height:16px;background:#a0a0a0"></div>
<div class="tx" style="left:529px;top:152px;font-size:12px;transform:scaleX(0.88);transform-origin:0 0;">Dst. Address</div>
<div class="a" style="left:596px;top:150px;width:1px;height:16px;background:#a0a0a0"></div>
<div class="tx" style="left:599px;top:152px;font-size:12px;transform:scaleX(0.88);transform-origin:0 0;">Proto</div>
<div class="a" style="left:636px;top:150px;width:1px;height:16px;background:#a0a0a0"></div>
<div class="tx" style="left:639px;top:152px;font-size:12px;transform:scaleX(0.88);transform-origin:0 0;">Src. Port</div>
<div class="a" style="left:696px;top:150px;width:1px;height:16px;background:#a0a0a0"></div>
<div class="tx" style="left:699px;top:152px;font-size:12px;transform:scaleX(0.88);transform-origin:0 0;">Dst. Port</div>
<div class="a" style="left:756px;top:150px;width:1px;height:16px;background:#a0a0a0"></div>
<div class="tx" style="left:759px;top:152px;font-size:12px;transform:scaleX(0.88);transform-origin:0 0;">In. Inter...</div>
<div class="a" style="left:806px;top:150px;width:1px;height:16px;background:#a0a0a0"></div>
<div class="tx" style="left:809px;top:152px;font-size:12px;transform:scaleX(0.88);transform-origin:0 0;">Out. Interfa</div>
<div class="a" style="left:873px;top:150px;width:1px;height:16px;background:#a0a0a0"></div>
<div class="tx" style="left:876px;top:152px;font-size:12px;transform:scaleX(0.88);transform-origin:0 0;">Bytes</div>
<div class="a" style="left:933px;top:150px;width:1px;height:16px;background:#a0a0a0"></div>
<div class="tx" style="left:936px;top:152px;font-size:12px;transform:scaleX(0.88);transform-origin:0 0;">Packets</div>
<div class="a" style="left:1036px;top:150px;width:1px;height:16px;background:#a0a0a0"></div>
<div class="a" style="left:1071px;top:150px;width:16px;height:17px;background:#efefef;border-left:1px solid #a0a0a0;border-bottom:1px solid #a0a0a0"></div>
<svg class="a" style="left:1074px;top:155px" width="11" height="7"><path d="M0.5 0.5H10.5L5.5 6Z" fill="#000"/></svg>
<div class="a" style="left:1071px;top:167px;width:16px;height:575px;background:#d8d8d8;border-left:1px solid #a0a0a0"></div>
<div class="a" style="left:1072px;top:167px;width:15px;height:16px;background:#efefef;border-bottom:1px solid #a0a0a0;box-shadow:inset 1px 1px 0 #fafafa"></div>
<svg class="a" style="left:1075px;top:171px" width="10" height="8"><path d="M4.8 0.5L9.5 5H6.5V7.5H3.3V5H0.3Z" fill="#000"/></svg>
<div class="a" style="left:1072px;top:528px;width:15px;height:199px;background:#efefef;border-top:1px solid #a0a0a0;border-bottom:1px solid #a0a0a0;box-shadow:inset 1px 0 0 #fafafa"></div>
<div class="a" style="left:1072px;top:727px;width:15px;height:15px;background:#efefef;box-shadow:inset 1px 0 0 #fafafa"></div>
<svg class="a" style="left:1075px;top:731px" width="10" height="8"><path d="M4.8 7.5L9.5 3H6.5V0.5H3.3V3H0.3Z" fill="#000"/></svg>
<div class="r" style="top:167px"><div class="c" style="left:23px"></div><div class="c" style="left:45px"></div><div class="c" style="left:185px"></div><div class="c" style="left:236px"></div><div class="c" style="left:306px"></div><div class="c" style="left:376px"></div><div class="c" style="left:416px"></div><div class="c" style="left:476px"></div><div class="c" style="left:536px"></div><div class="c" style="left:586px"></div><div class="c" style="left:653px"></div><div class="c" style="left:713px"></div><div class="c" style="left:816px"></div></div>
<div class="tx" style="right:1125px;top:167px;font-size:12px;transform:scaleX(0.88);transform-origin:100% 0;">54</div>
<div class="a" style="left:269px;top:167px"><svg class="ic" width="14" height="14" viewBox="0 0 14 14"><defs><linearGradient id="xg" x1="0" y1="0" x2="0" y2="1"><stop offset="0" stop-color="#e85a5a"/><stop offset="0.45" stop-color="#d42020"/><stop offset="1" stop-color="#c01010"/></linearGradient></defs><path d="M1 3.5L3.5 1L7 4.5L10.5 1L13 3.5L9.5 7L13 10.5L10.5 13L7 9.5L3.5 13L1 10.5L4.5 7Z" fill="url(#xg)"/></svg></div>
<div class="tx" style="left:284px;top:167px;font-size:12px;transform:scaleX(0.88);transform-origin:0 0;">reject</div>
<div class="tx" style="left:408px;top:167px;font-size:12px;transform:scaleX(0.88);transform-origin:0 0;">input</div>
<div class="tx" style="left:599px;top:167px;font-size:12px;transform:scaleX(0.88);transform-origin:0 0;">6 (tcp)</div>
<div class="tx" style="left:699px;top:167px;font-size:12px;transform:scaleX(0.88);transform-origin:0 0;">53</div>
<div class="tx" style="right:435px;top:167px;font-size:12px;transform:scaleX(0.88);transform-origin:100% 0;">12.4 KiB</div>
<div class="tx" style="right:332px;top:167px;font-size:12px;transform:scaleX(0.88);transform-origin:100% 0;">222</div>
<div class="r" style="top:182px"></div>
<div class="tx" style="left:236px;top:182px;font-size:12px;transform:scaleX(0.88);transform-origin:0 0;">;;; BLOQUEIO ACESSO DNS EXTERNO</div>
<div class="r" style="top:197px"><div class="c" style="left:23px"></div><div class="c" style="left:45px"></div><div class="c" style="left:185px"></div><div class="c" style="left:236px"></div><div class="c" style="left:306px"></div><div class="c" style="left:376px"></div><div class="c" style="left:416px"></div><div class="c" style="left:476px"></div><div class="c" style="left:536px"></div><div class="c" style="left:586px"></div><div class="c" style="left:653px"></div><div class="c" style="left:713px"></div><div class="c" style="left:816px"></div></div>
<div class="tx" style="right:1125px;top:197px;font-size:12px;transform:scaleX(0.88);transform-origin:100% 0;">55</div>
<div class="a" style="left:269px;top:197px"><svg class="ic" width="14" height="14" viewBox="0 0 14 14"><defs><linearGradient id="xg" x1="0" y1="0" x2="0" y2="1"><stop offset="0" stop-color="#e85a5a"/><stop offset="0.45" stop-color="#d42020"/><stop offset="1" stop-color="#c01010"/></linearGradient></defs><path d="M1 3.5L3.5 1L7 4.5L10.5 1L13 3.5L9.5 7L13 10.5L10.5 13L7 9.5L3.5 13L1 10.5L4.5 7Z" fill="url(#xg)"/></svg></div>
<div class="tx" style="left:284px;top:197px;font-size:12px;transform:scaleX(0.88);transform-origin:0 0;">drop</div>
<div class="tx" style="left:408px;top:197px;font-size:12px;transform:scaleX(0.88);transform-origin:0 0;">input</div>
<div class="tx" style="left:599px;top:197px;font-size:12px;transform:scaleX(0.88);transform-origin:0 0;">17 (u</div>
<div class="tx" style="left:699px;top:197px;font-size:12px;transform:scaleX(0.88);transform-origin:0 0;">53</div>
<div class="tx" style="left:759px;top:197px;font-size:12px;transform:scaleX(0.88);transform-origin:0 0;">combo1</div>
<div class="tx" style="right:435px;top:197px;font-size:12px;transform:scaleX(0.88);transform-origin:100% 0;">0 B</div>
<div class="tx" style="right:332px;top:197px;font-size:12px;transform:scaleX(0.88);transform-origin:100% 0;">0</div>
<div class="r" style="top:212px"><div class="c" style="left:23px"></div><div class="c" style="left:45px"></div><div class="c" style="left:185px"></div><div class="c" style="left:236px"></div><div class="c" style="left:306px"></div><div class="c" style="left:376px"></div><div class="c" style="left:416px"></div><div class="c" style="left:476px"></div><div class="c" style="left:536px"></div><div class="c" style="left:586px"></div><div class="c" style="left:653px"></div><div class="c" style="left:713px"></div><div class="c" style="left:816px"></div></div>
<div class="tx" style="right:1125px;top:212px;font-size:12px;transform:scaleX(0.88);transform-origin:100% 0;">56</div>
<div class="a" style="left:269px;top:212px"><svg class="ic" width="14" height="14" viewBox="0 0 14 14"><defs><linearGradient id="xg" x1="0" y1="0" x2="0" y2="1"><stop offset="0" stop-color="#e85a5a"/><stop offset="0.45" stop-color="#d42020"/><stop offset="1" stop-color="#c01010"/></linearGradient></defs><path d="M1 3.5L3.5 1L7 4.5L10.5 1L13 3.5L9.5 7L13 10.5L10.5 13L7 9.5L3.5 13L1 10.5L4.5 7Z" fill="url(#xg)"/></svg></div>
<div class="tx" style="left:284px;top:212px;font-size:12px;transform:scaleX(0.88);transform-origin:0 0;">drop</div>
<div class="tx" style="left:408px;top:212px;font-size:12px;transform:scaleX(0.88);transform-origin:0 0;">input</div>
<div class="tx" style="left:599px;top:212px;font-size:12px;transform:scaleX(0.88);transform-origin:0 0;">17 (u</div>
<div class="tx" style="left:699px;top:212px;font-size:12px;transform:scaleX(0.88);transform-origin:0 0;">53</div>
<div class="tx" style="left:759px;top:212px;font-size:12px;transform:scaleX(0.88);transform-origin:0 0;">BALAN</div>
<div class="tx" style="right:435px;top:212px;font-size:12px;transform:scaleX(0.88);transform-origin:100% 0;">0 B</div>
<div class="tx" style="right:332px;top:212px;font-size:12px;transform:scaleX(0.88);transform-origin:100% 0;">0</div>
<div class="r" style="top:227px"></div>
<div class="tx" style="left:236px;top:227px;font-size:12px;transform:scaleX(0.88);transform-origin:0 0;">;;; Limite de Conexoes Simultaneas</div>
<div class="r" style="top:242px"><div class="c" style="left:23px"></div><div class="c" style="left:45px"></div><div class="c" style="left:185px"></div><div class="c" style="left:236px"></div><div class="c" style="left:306px"></div><div class="c" style="left:376px"></div><div class="c" style="left:416px"></div><div class="c" style="left:476px"></div><div class="c" style="left:536px"></div><div class="c" style="left:586px"></div><div class="c" style="left:653px"></div><div class="c" style="left:713px"></div><div class="c" style="left:816px"></div></div>
<div class="tx" style="right:1125px;top:242px;font-size:12px;transform:scaleX(0.88);transform-origin:100% 0;">57</div>
<div class="a" style="left:269px;top:242px"><svg class="ic" width="14" height="14" viewBox="0 0 14 14"><defs><linearGradient id="xg" x1="0" y1="0" x2="0" y2="1"><stop offset="0" stop-color="#e85a5a"/><stop offset="0.45" stop-color="#d42020"/><stop offset="1" stop-color="#c01010"/></linearGradient></defs><path d="M1 3.5L3.5 1L7 4.5L10.5 1L13 3.5L9.5 7L13 10.5L10.5 13L7 9.5L3.5 13L1 10.5L4.5 7Z" fill="url(#xg)"/></svg></div>
<div class="tx" style="left:284px;top:242px;font-size:12px;transform:scaleX(0.88);transform-origin:0 0;">drop</div>
<div class="tx" style="left:408px;top:242px;font-size:12px;transform:scaleX(0.88);transform-origin:0 0;">forward</div>
<div class="tx" style="left:599px;top:242px;font-size:12px;transform:scaleX(0.88);transform-origin:0 0;">6 (tcp)</div>
<div class="tx" style="right:435px;top:242px;font-size:12px;transform:scaleX(0.88);transform-origin:100% 0;">0 B</div>
<div class="tx" style="right:332px;top:242px;font-size:12px;transform:scaleX(0.88);transform-origin:100% 0;">0</div>
<div class="r" style="top:257px"></div>
<div class="tx" style="left:236px;top:257px;font-size:12px;transform:scaleX(0.88);transform-origin:0 0;">;;; Bloqueia conexoes invalidas</div>
<div class="r" style="top:272px"><div class="c" style="left:23px"></div><div class="c" style="left:45px"></div><div class="c" style="left:185px"></div><div class="c" style="left:236px"></div><div class="c" style="left:306px"></div><div class="c" style="left:376px"></div><div class="c" style="left:416px"></div><div class="c" style="left:476px"></div><div class="c" style="left:536px"></div><div class="c" style="left:586px"></div><div class="c" style="left:653px"></div><div class="c" style="left:713px"></div><div class="c" style="left:816px"></div></div>
<div class="tx" style="right:1125px;top:272px;font-size:12px;transform:scaleX(0.88);transform-origin:100% 0;">58</div>
<div class="a" style="left:269px;top:272px"><svg class="ic" width="14" height="14" viewBox="0 0 14 14"><defs><linearGradient id="xg" x1="0" y1="0" x2="0" y2="1"><stop offset="0" stop-color="#e85a5a"/><stop offset="0.45" stop-color="#d42020"/><stop offset="1" stop-color="#c01010"/></linearGradient></defs><path d="M1 3.5L3.5 1L7 4.5L10.5 1L13 3.5L9.5 7L13 10.5L10.5 13L7 9.5L3.5 13L1 10.5L4.5 7Z" fill="url(#xg)"/></svg></div>
<div class="tx" style="left:284px;top:272px;font-size:12px;transform:scaleX(0.88);transform-origin:0 0;">drop</div>
<div class="tx" style="left:408px;top:272px;font-size:12px;transform:scaleX(0.88);transform-origin:0 0;">forward</div>
<div class="tx" style="right:435px;top:272px;font-size:12px;transform:scaleX(0.88);transform-origin:100% 0;">50.4 MiB</div>
<div class="tx" style="right:332px;top:272px;font-size:12px;transform:scaleX(0.88);transform-origin:100% 0;">532 205</div>
<div class="r" style="top:287px"></div>
<div class="tx" style="left:236px;top:287px;font-size:12px;transform:scaleX(0.88);transform-origin:0 0;">;;; Bloqueio do Proxy Externo</div>
<div class="r" style="top:302px"><div class="c" style="left:23px"></div><div class="c" style="left:45px"></div><div class="c" style="left:185px"></div><div class="c" style="left:236px"></div><div class="c" style="left:306px"></div><div class="c" style="left:376px"></div><div class="c" style="left:416px"></div><div class="c" style="left:476px"></div><div class="c" style="left:536px"></div><div class="c" style="left:586px"></div><div class="c" style="left:653px"></div><div class="c" style="left:713px"></div><div class="c" style="left:816px"></div></div>
<div class="tx" style="right:1125px;top:302px;font-size:12px;transform:scaleX(0.88);transform-origin:100% 0;">59</div>
<div class="a" style="left:269px;top:302px"><svg class="ic" width="14" height="14" viewBox="0 0 14 14"><defs><linearGradient id="xg" x1="0" y1="0" x2="0" y2="1"><stop offset="0" stop-color="#e85a5a"/><stop offset="0.45" stop-color="#d42020"/><stop offset="1" stop-color="#c01010"/></linearGradient></defs><path d="M1 3.5L3.5 1L7 4.5L10.5 1L13 3.5L9.5 7L13 10.5L10.5 13L7 9.5L3.5 13L1 10.5L4.5 7Z" fill="url(#xg)"/></svg></div>
<div class="tx" style="left:284px;top:302px;font-size:12px;transform:scaleX(0.88);transform-origin:0 0;">drop</div>
<div class="tx" style="left:408px;top:302px;font-size:12px;transform:scaleX(0.88);transform-origin:0 0;">input</div>
<div class="tx" style="left:599px;top:302px;font-size:12px;transform:scaleX(0.88);transform-origin:0 0;">6 (tcp)</div>
<div class="tx" style="left:699px;top:302px;font-size:12px;transform:scaleX(0.88);transform-origin:0 0;">3128</div>
<div class="tx" style="left:759px;top:302px;font-size:12px;transform:scaleX(0.88);transform-origin:0 0;">combo1</div>
<div class="tx" style="right:435px;top:302px;font-size:12px;transform:scaleX(0.88);transform-origin:100% 0;">1386 B</div>
<div class="tx" style="right:332px;top:302px;font-size:12px;transform:scaleX(0.88);transform-origin:100% 0;">25</div>
<div class="r" style="top:317px"></div>
<div class="tx" style="left:236px;top:317px;font-size:12px;transform:scaleX(0.88);transform-origin:0 0;">;;; Drop PhatBot, Agobot, Gaobot</div>
<div class="r" style="top:332px"><div class="c" style="left:23px"></div><div class="c" style="left:45px"></div><div class="c" style="left:185px"></div><div class="c" style="left:236px"></div><div class="c" style="left:306px"></div><div class="c" style="left:376px"></div><div class="c" style="left:416px"></div><div class="c" style="left:476px"></div><div class="c" style="left:536px"></div><div class="c" style="left:586px"></div><div class="c" style="left:653px"></div><div class="c" style="left:713px"></div><div class="c" style="left:816px"></div></div>
<div class="tx" style="right:1125px;top:332px;font-size:12px;transform:scaleX(0.88);transform-origin:100% 0;">60</div>
<div class="a" style="left:269px;top:332px"><svg class="ic" width="14" height="14" viewBox="0 0 14 14"><defs><linearGradient id="xg" x1="0" y1="0" x2="0" y2="1"><stop offset="0" stop-color="#e85a5a"/><stop offset="0.45" stop-color="#d42020"/><stop offset="1" stop-color="#c01010"/></linearGradient></defs><path d="M1 3.5L3.5 1L7 4.5L10.5 1L13 3.5L9.5 7L13 10.5L10.5 13L7 9.5L3.5 13L1 10.5L4.5 7Z" fill="url(#xg)"/></svg></div>
<div class="tx" style="left:284px;top:332px;font-size:12px;transform:scaleX(0.88);transform-origin:0 0;">drop</div>
<div class="tx" style="left:408px;top:332px;font-size:12px;transform:scaleX(0.88);transform-origin:0 0;">Virus</div>
<div class="tx" style="left:599px;top:332px;font-size:12px;transform:scaleX(0.88);transform-origin:0 0;">6 (tcp)</div>
<div class="tx" style="left:699px;top:332px;font-size:12px;transform:scaleX(0.88);transform-origin:0 0;">65506</div>
<div class="tx" style="right:435px;top:332px;font-size:12px;transform:scaleX(0.88);transform-origin:100% 0;">0 B</div>
<div class="tx" style="right:332px;top:332px;font-size:12px;transform:scaleX(0.88);transform-origin:100% 0;">0</div>
<div class="r" style="top:347px"></div>
<div class="tx" style="left:236px;top:347px;font-size:12px;transform:scaleX(0.88);transform-origin:0 0;">;;; AntiSPAM o AntiWORM</div>
<div class="r" style="top:362px"><div class="c" style="left:23px"></div><div class="c" style="left:45px"></div><div class="c" style="left:185px"></div><div class="c" style="left:236px"></div><div class="c" style="left:306px"></div><div class="c" style="left:376px"></div><div class="c" style="left:416px"></div><div class="c" style="left:476px"></div><div class="c" style="left:536px"></div><div class="c" style="left:586px"></div><div class="c" style="left:653px"></div><div class="c" style="left:713px"></div><div class="c" style="left:816px"></div></div>
<div class="tx" style="right:1125px;top:362px;font-size:12px;transform:scaleX(0.88);transform-origin:100% 0;">61</div>
<div class="a" style="left:269px;top:362px"><svg class="ic" width="14" height="14" viewBox="0 0 14 14"><rect x="1.6" y="4.6" width="7.8" height="5.3" fill="none" stroke="#000" stroke-width="1.2"/><path d="M4 7H7" stroke="#aaa" stroke-width="0.6"/><path d="M9.5 1.6L10.3 3.5L12.2 4.3L10.3 5.1L9.5 7L8.7 5.1L6.8 4.3L8.7 3.5Z" fill="#f00000"/></svg></div>
<div class="tx" style="left:284px;top:362px;font-size:12px;transform:scaleX(0.88);transform-origin:0 0;">add src to address list</div>
<div class="tx" style="left:408px;top:362px;font-size:12px;transform:scaleX(0.88);transform-origin:0 0;">forward</div>
<div class="tx" style="left:599px;top:362px;font-size:12px;transform:scaleX(0.88);transform-origin:0 0;">6 (tcp)</div>
<div class="tx" style="left:699px;top:362px;font-size:12px;transform:scaleX(0.88);transform-origin:0 0;">465</div>
<div class="tx" style="right:435px;top:362px;font-size:12px;transform:scaleX(0.88);transform-origin:100% 0;">0 B</div>
<div class="tx" style="right:332px;top:362px;font-size:12px;transform:scaleX(0.88);transform-origin:100% 0;">0</div>
<div class="r" style="top:377px"><div class="c" style="left:23px"></div><div class="c" style="left:45px"></div><div class="c" style="left:185px"></div><div class="c" style="left:236px"></div><div class="c" style="left:306px"></div><div class="c" style="left:376px"></div><div class="c" style="left:416px"></div><div class="c" style="left:476px"></div><div class="c" style="left:536px"></div><div class="c" style="left:586px"></div><div class="c" style="left:653px"></div><div class="c" style="left:713px"></div><div class="c" style="left:816px"></div></div>
<div class="tx" style="right:1125px;top:377px;font-size:12px;transform:scaleX(0.88);transform-origin:100% 0;">62</div>
<div class="a" style="left:269px;top:377px"><svg class="ic" width="14" height="14" viewBox="0 0 14 14"><rect x="1.6" y="4.6" width="7.8" height="5.3" fill="none" stroke="#000" stroke-width="1.2"/><path d="M4 7H7" stroke="#aaa" stroke-width="0.6"/><path d="M9.5 1.6L10.3 3.5L12.2 4.3L10.3 5.1L9.5 7L8.7 5.1L6.8 4.3L8.7 3.5Z" fill="#f00000"/></svg></div>
<div class="tx" style="left:284px;top:377px;font-size:12px;transform:scaleX(0.88);transform-origin:0 0;">add src to address list</div>
<div class="tx" style="left:408px;top:377px;font-size:12px;transform:scaleX(0.88);transform-origin:0 0;">forward</div>
<div class="tx" style="left:599px;top:377px;font-size:12px;transform:scaleX(0.88);transform-origin:0 0;">6 (tcp)</div>
<div class="tx" style="left:699px;top:377px;font-size:12px;transform:scaleX(0.88);transform-origin:0 0;">25</div>
<div class="tx" style="right:435px;top:377px;font-size:12px;transform:scaleX(0.88);transform-origin:100% 0;">0 B</div>
<div class="tx" style="right:332px;top:377px;font-size:12px;transform:scaleX(0.88);transform-origin:100% 0;">0</div>
<div class="r" style="top:392px"><div class="c" style="left:23px"></div><div class="c" style="left:45px"></div><div class="c" style="left:185px"></div><div class="c" style="left:236px"></div><div class="c" style="left:306px"></div><div class="c" style="left:376px"></div><div class="c" style="left:416px"></div><div class="c" style="left:476px"></div><div class="c" style="left:536px"></div><div class="c" style="left:586px"></div><div class="c" style="left:653px"></div><div class="c" style="left:713px"></div><div class="c" style="left:816px"></div></div>
<div class="tx" style="right:1125px;top:392px;font-size:12px;transform:scaleX(0.88);transform-origin:100% 0;">63</div>
<div class="a" style="left:269px;top:392px"><svg class="ic" width="14" height="14" viewBox="0 0 14 14"><defs><linearGradient id="xg" x1="0" y1="0" x2="0" y2="1"><stop offset="0" stop-color="#e85a5a"/><stop offset="0.45" stop-color="#d42020"/><stop offset="1" stop-color="#c01010"/></linearGradient></defs><path d="M1 3.5L3.5 1L7 4.5L10.5 1L13 3.5L9.5 7L13 10.5L10.5 13L7 9.5L3.5 13L1 10.5L4.5 7Z" fill="url(#xg)"/></svg></div>
<div class="tx" style="left:284px;top:392px;font-size:12px;transform:scaleX(0.88);transform-origin:0 0;">drop</div>
<div class="tx" style="left:408px;top:392px;font-size:12px;transform:scaleX(0.88);transform-origin:0 0;">forward</div>
<div class="tx" style="left:599px;top:392px;font-size:12px;transform:scaleX(0.88);transform-origin:0 0;">6 (tcp)</div>
<div class="tx" style="left:699px;top:392px;font-size:12px;transform:scaleX(0.88);transform-origin:0 0;">25</div>
<div class="tx" style="right:435px;top:392px;font-size:12px;transform:scaleX(0.88);transform-origin:100% 0;">0 B</div>
<div class="tx" style="right:332px;top:392px;font-size:12px;transform:scaleX(0.88);transform-origin:100% 0;">0</div>
<div class="r" style="top:407px"><div class="c" style="left:23px"></div><div class="c" style="left:45px"></div><div class="c" style="left:185px"></div><div class="c" style="left:236px"></div><div class="c" style="left:306px"></div><div class="c" style="left:376px"></div><div class="c" style="left:416px"></div><div class="c" style="left:476px"></div><div class="c" style="left:536px"></div><div class="c" style="left:586px"></div><div class="c" style="left:653px"></div><div class="c" style="left:713px"></div><div class="c" style="left:816px"></div></div>
<div class="tx" style="right:1125px;top:407px;font-size:12px;transform:scaleX(0.88);transform-origin:100% 0;">64</div>
<div class="a" style="left:269px;top:407px"><svg class="ic" width="14" height="14" viewBox="0 0 14 14"><defs><linearGradient id="xg" x1="0" y1="0" x2="0" y2="1"><stop offset="0" stop-color="#e85a5a"/><stop offset="0.45" stop-color="#d42020"/><stop offset="1" stop-color="#c01010"/></linearGradient></defs><path d="M1 3.5L3.5 1L7 4.5L10.5 1L13 3.5L9.5 7L13 10.5L10.5 13L7 9.5L3.5 13L1 10.5L4.5 7Z" fill="url(#xg)"/></svg></div>
<div class="tx" style="left:284px;top:407px;font-size:12px;transform:scaleX(0.88);transform-origin:0 0;">drop</div>
<div class="tx" style="left:408px;top:407px;font-size:12px;transform:scaleX(0.88);transform-origin:0 0;">forward</div>
<div class="tx" style="left:599px;top:407px;font-size:12px;transform:scaleX(0.88);transform-origin:0 0;">6 (tcp)</div>
<div class="tx" style="left:699px;top:407px;font-size:12px;transform:scaleX(0.88);transform-origin:0 0;">465</div>
<div class="tx" style="right:435px;top:407px;font-size:12px;transform:scaleX(0.88);transform-origin:100% 0;">0 B</div>
<div class="tx" style="right:332px;top:407px;font-size:12px;transform:scaleX(0.88);transform-origin:100% 0;">0</div>
<div class="r" style="top:422px"></div>
<div class="tx" style="left:236px;top:422px;font-size:12px;transform:scaleX(0.88);transform-origin:0 0;">;;; BLOQUEIO DE DDOS</div>
<div class="r" style="top:437px"><div class="c" style="left:23px"></div><div class="c" style="left:45px"></div><div class="c" style="left:185px"></div><div class="c" style="left:236px"></div><div class="c" style="left:306px"></div><div class="c" style="left:376px"></div><div class="c" style="left:416px"></div><div class="c" style="left:476px"></div><div class="c" style="left:536px"></div><div class="c" style="left:586px"></div><div class="c" style="left:653px"></div><div class="c" style="left:713px"></div><div class="c" style="left:816px"></div></div>
<div class="tx" style="right:1125px;top:437px;font-size:12px;transform:scaleX(0.88);transform-origin:100% 0;">65</div>
<div class="a" style="left:269px;top:437px"><svg class="ic" width="14" height="14" viewBox="0 0 14 14"><path d="M1.2 9.6L3.5 4.8L6.5 3.5L9.5 4.5L11.5 3.3L12.8 9.6L6.8 9.6L9 7.8L7 6.6L5 7.2L3.5 9.6Z" fill="#a4c4ee" stroke="#4a7cc8" stroke-width="0.9" stroke-linejoin="round"/></svg></div>
<div class="tx" style="left:284px;top:437px;font-size:12px;transform:scaleX(0.88);transform-origin:0 0;">jump</div>
<div class="tx" style="left:408px;top:437px;font-size:12px;transform:scaleX(0.88);transform-origin:0 0;">forward</div>
<div class="tx" style="right:435px;top:437px;font-size:12px;transform:scaleX(0.88);transform-origin:100% 0;">4.9 GiB</div>
<div class="tx" style="right:332px;top:437px;font-size:12px;transform:scaleX(0.88);transform-origin:100% 0;">22 970 461</div>
<div class="r" style="top:452px"><div class="c" style="left:23px"></div><div class="c" style="left:45px"></div><div class="c" style="left:185px"></div><div class="c" style="left:236px"></div><div class="c" style="left:306px"></div><div class="c" style="left:376px"></div><div class="c" style="left:416px"></div><div class="c" style="left:476px"></div><div class="c" style="left:536px"></div><div class="c" style="left:586px"></div><div class="c" style="left:653px"></div><div class="c" style="left:713px"></div><div class="c" style="left:816px"></div></div>
<div class="tx" style="right:1125px;top:452px;font-size:12px;transform:scaleX(0.88);transform-origin:100% 0;">66</div>
<div class="a" style="left:269px;top:452px"><svg class="ic" width="14" height="14" viewBox="0 0 14 14"><defs><linearGradient id="xg" x1="0" y1="0" x2="0" y2="1"><stop offset="0" stop-color="#e85a5a"/><stop offset="0.45" stop-color="#d42020"/><stop offset="1" stop-color="#c01010"/></linearGradient></defs><path d="M1 3.5L3.5 1L7 4.5L10.5 1L13 3.5L9.5 7L13 10.5L10.5 13L7 9.5L3.5 13L1 10.5L4.5 7Z" fill="url(#xg)"/></svg></div>
<div class="tx" style="left:284px;top:452px;font-size:12px;transform:scaleX(0.88);transform-origin:0 0;">drop</div>
<div class="tx" style="left:408px;top:452px;font-size:12px;transform:scaleX(0.88);transform-origin:0 0;">forward</div>
<div class="tx" style="right:435px;top:452px;font-size:12px;transform:scaleX(0.88);transform-origin:100% 0;">11.5 MiB</div>
<div class="tx" style="right:332px;top:452px;font-size:12px;transform:scaleX(0.88);transform-origin:100% 0;">152 080</div>
<div class="r" style="top:467px"><div class="c" style="left:23px"></div><div class="c" style="left:45px"></div><div class="c" style="left:185px"></div><div class="c" style="left:236px"></div><div class="c" style="left:306px"></div><div class="c" style="left:376px"></div><div class="c" style="left:416px"></div><div class="c" style="left:476px"></div><div class="c" style="left:536px"></div><div class="c" style="left:586px"></div><div class="c" style="left:653px"></div><div class="c" style="left:713px"></div><div class="c" style="left:816px"></div></div>
<div class="tx" style="right:1125px;top:467px;font-size:12px;transform:scaleX(0.88);transform-origin:100% 0;">67</div>
<div class="a" style="left:269px;top:467px"><svg class="ic" width="14" height="14" viewBox="0 0 14 14"><path d="M1.5 6.2L5.5 2.5V4.5H12.5V8.5H5.5V10L1.5 6.2Z" fill="#b47cdc" stroke="#9058c0" stroke-width="0.6" stroke-linejoin="round"/></svg></div>
<div class="tx" style="left:284px;top:467px;font-size:12px;transform:scaleX(0.88);transform-origin:0 0;">return</div>
<div class="tx" style="left:408px;top:467px;font-size:12px;transform:scaleX(0.88);transform-origin:0 0;">block-d</div>
<div class="tx" style="right:435px;top:467px;font-size:12px;transform:scaleX(0.88);transform-origin:100% 0;">4.9 GiB</div>
<div class="tx" style="right:332px;top:467px;font-size:12px;transform:scaleX(0.88);transform-origin:100% 0;">22 939 169</div>
<div class="r" style="top:482px"><div class="c" style="left:23px"></div><div class="c" style="left:45px"></div><div class="c" style="left:185px"></div><div class="c" style="left:236px"></div><div class="c" style="left:306px"></div><div class="c" style="left:376px"></div><div class="c" style="left:416px"></div><div class="c" style="left:476px"></div><div class="c" style="left:536px"></div><div class="c" style="left:586px"></div><div class="c" style="left:653px"></div><div class="c" style="left:713px"></div><div class="c" style="left:816px"></div></div>
<div class="tx" style="right:1125px;top:482px;font-size:12px;transform:scaleX(0.88);transform-origin:100% 0;">68</div>
<div class="a" style="left:269px;top:482px"><svg class="ic" width="14" height="14" viewBox="0 0 14 14"><rect x="1.6" y="4.6" width="7.8" height="5.3" fill="none" stroke="#000" stroke-width="1.2"/><path d="M4 7H7" stroke="#aaa" stroke-width="0.6"/><path d="M9.5 1.6L10.3 3.5L12.2 4.3L10.3 5.1L9.5 7L8.7 5.1L6.8 4.3L8.7 3.5Z" fill="#f00000"/></svg></div>
<div class="tx" style="left:284px;top:482px;font-size:12px;transform:scaleX(0.88);transform-origin:0 0;">add dst to address list</div>
<div class="tx" style="left:408px;top:482px;font-size:12px;transform:scaleX(0.88);transform-origin:0 0;">block-d</div>
<div class="tx" style="right:435px;top:482px;font-size:12px;transform:scaleX(0.88);transform-origin:100% 0;">2568.6 KiB</div>
<div class="tx" style="right:332px;top:482px;font-size:12px;transform:scaleX(0.88);transform-origin:100% 0;">31 292</div>
<div class="r" style="top:497px"><div class="c" style="left:23px"></div><div class="c" style="left:45px"></div><div class="c" style="left:185px"></div><div class="c" style="left:236px"></div><div class="c" style="left:306px"></div><div class="c" style="left:376px"></div><div class="c" style="left:416px"></div><div class="c" style="left:476px"></div><div class="c" style="left:536px"></div><div class="c" style="left:586px"></div><div class="c" style="left:653px"></div><div class="c" style="left:713px"></div><div class="c" style="left:816px"></div></div>
<div class="tx" style="right:1125px;top:497px;font-size:12px;transform:scaleX(0.88);transform-origin:100% 0;">69</div>
<div class="a" style="left:269px;top:497px"><svg class="ic" width="14" height="14" viewBox="0 0 14 14"><rect x="1.6" y="4.6" width="7.8" height="5.3" fill="none" stroke="#000" stroke-width="1.2"/><path d="M4 7H7" stroke="#aaa" stroke-width="0.6"/><path d="M9.5 1.6L10.3 3.5L12.2 4.3L10.3 5.1L9.5 7L8.7 5.1L6.8 4.3L8.7 3.5Z" fill="#f00000"/></svg></div>
<div class="tx" style="left:284px;top:497px;font-size:12px;transform:scaleX(0.88);transform-origin:0 0;">add src to address list</div>
<div class="tx" style="left:408px;top:497px;font-size:12px;transform:scaleX(0.88);transform-origin:0 0;">block-d</div>
<div class="tx" style="right:435px;top:497px;font-size:12px;transform:scaleX(0.88);transform-origin:100% 0;">2568.6 KiB</div>
<div class="tx" style="right:332px;top:497px;font-size:12px;transform:scaleX(0.88);transform-origin:100% 0;">31 292</div>
<div class="r" style="top:512px"></div>
<div class="tx" style="left:236px;top:512px;font-size:12px;transform:scaleX(0.88);transform-origin:0 0;">;;; WORM INFECTED PORTA 445</div>
<div class="r" style="top:527px"><div class="c" style="left:23px"></div><div class="c" style="left:45px"></div><div class="c" style="left:185px"></div><div class="c" style="left:236px"></div><div class="c" style="left:306px"></div><div class="c" style="left:376px"></div><div class="c" style="left:416px"></div><div class="c" style="left:476px"></div><div class="c" style="left:536px"></div><div class="c" style="left:586px"></div><div class="c" style="left:653px"></div><div class="c" style="left:713px"></div><div class="c" style="left:816px"></div></div>
<div class="tx" style="right:1125px;top:527px;font-size:12px;transform:scaleX(0.88);transform-origin:100% 0;">70</div>
<div class="a" style="left:269px;top:527px"><svg class="ic" width="14" height="14" viewBox="0 0 14 14"><defs><linearGradient id="xg" x1="0" y1="0" x2="0" y2="1"><stop offset="0" stop-color="#e85a5a"/><stop offset="0.45" stop-color="#d42020"/><stop offset="1" stop-color="#c01010"/></linearGradient></defs><path d="M1 3.5L3.5 1L7 4.5L10.5 1L13 3.5L9.5 7L13 10.5L10.5 13L7 9.5L3.5 13L1 10.5L4.5 7Z" fill="url(#xg)"/></svg></div>
<div class="tx" style="left:284px;top:527px;font-size:12px;transform:scaleX(0.88);transform-origin:0 0;">drop</div>
<div class="tx" style="left:408px;top:527px;font-size:12px;transform:scaleX(0.88);transform-origin:0 0;">forward</div>
<div class="tx" style="left:599px;top:527px;font-size:12px;transform:scaleX(0.88);transform-origin:0 0;">6 (tcp)</div>
<div class="tx" style="left:699px;top:527px;font-size:12px;transform:scaleX(0.88);transform-origin:0 0;">135-139,...</div>
<div class="tx" style="right:435px;top:527px;font-size:12px;transform:scaleX(0.88);transform-origin:100% 0;">177.3 MiB</div>
<div class="tx" style="right:332px;top:527px;font-size:12px;transform:scaleX(0.88);transform-origin:100% 0;">3 099 608</div>
<div class="r" style="top:542px"></div>
<div class="tx" style="left:236px;top:542px;font-size:12px;transform:scaleX(0.88);transform-origin:0 0;">;;; drop ftp brute forcers</div>
<div class="r" style="top:557px"><div class="c" style="left:23px"></div><div class="c" style="left:45px"></div><div class="c" style="left:185px"></div><div class="c" style="left:236px"></div><div class="c" style="left:306px"></div><div class="c" style="left:376px"></div><div class="c" style="left:416px"></div><div class="c" style="left:476px"></div><div class="c" style="left:536px"></div><div class="c" style="left:586px"></div><div class="c" style="left:653px"></div><div class="c" style="left:713px"></div><div class="c" style="left:816px"></div></div>
<div class="tx" style="right:1125px;top:557px;font-size:12px;transform:scaleX(0.88);transform-origin:100% 0;">71</div>
<div class="a" style="left:269px;top:557px"><svg class="ic" width="14" height="14" viewBox="0 0 14 14"><defs><linearGradient id="xg" x1="0" y1="0" x2="0" y2="1"><stop offset="0" stop-color="#e85a5a"/><stop offset="0.45" stop-color="#d42020"/><stop offset="1" stop-color="#c01010"/></linearGradient></defs><path d="M1 3.5L3.5 1L7 4.5L10.5 1L13 3.5L9.5 7L13 10.5L10.5 13L7 9.5L3.5 13L1 10.5L4.5 7Z" fill="url(#xg)"/></svg></div>
<div class="tx" style="left:284px;top:557px;font-size:12px;transform:scaleX(0.88);transform-origin:0 0;">drop</div>
<div class="tx" style="left:408px;top:557px;font-size:12px;transform:scaleX(0.88);transform-origin:0 0;">input</div>
<div class="tx" style="left:599px;top:557px;font-size:12px;transform:scaleX(0.88);transform-origin:0 0;">6 (tcp)</div>
<div class="tx" style="left:699px;top:557px;font-size:12px;transform:scaleX(0.88);transform-origin:0 0;">21</div>
<div class="tx" style="right:435px;top:557px;font-size:12px;transform:scaleX(0.88);transform-origin:100% 0;">0 B</div>
<div class="tx" style="right:332px;top:557px;font-size:12px;transform:scaleX(0.88);transform-origin:100% 0;">0</div>
<div class="r" style="top:572px"><div class="c" style="left:23px"></div><div class="c" style="left:45px"></div><div class="c" style="left:185px"></div><div class="c" style="left:236px"></div><div class="c" style="left:306px"></div><div class="c" style="left:376px"></div><div class="c" style="left:416px"></div><div class="c" style="left:476px"></div><div class="c" style="left:536px"></div><div class="c" style="left:586px"></div><div class="c" style="left:653px"></div><div class="c" style="left:713px"></div><div class="c" style="left:816px"></div></div>
<div class="tx" style="right:1125px;top:572px;font-size:12px;transform:scaleX(0.88);transform-origin:100% 0;">72</div>
<div class="a" style="left:269px;top:572px"><svg class="ic" width="14" height="14" viewBox="0 0 14 14"><path d="M0.5 8L2.8 5.8L5.2 8.3L11.8 1.2L13.5 3.2L5.3 12.5Z" fill="#2fae2f" stroke="#1c7d1c" stroke-width="0.5"/></svg></div>
<div class="tx" style="left:284px;top:572px;font-size:12px;transform:scaleX(0.88);transform-origin:0 0;">accept</div>
<div class="tx" style="left:408px;top:572px;font-size:12px;transform:scaleX(0.88);transform-origin:0 0;">output</div>
<div class="tx" style="left:599px;top:572px;font-size:12px;transform:scaleX(0.88);transform-origin:0 0;">6 (tcp)</div>
<div class="tx" style="right:435px;top:572px;font-size:12px;transform:scaleX(0.88);transform-origin:100% 0;">0 B</div>
<div class="tx" style="right:332px;top:572px;font-size:12px;transform:scaleX(0.88);transform-origin:100% 0;">0</div>
<div class="r" style="top:587px"><div class="c" style="left:23px"></div><div class="c" style="left:45px"></div><div class="c" style="left:185px"></div><div class="c" style="left:236px"></div><div class="c" style="left:306px"></div><div class="c" style="left:376px"></div><div class="c" style="left:416px"></div><div class="c" style="left:476px"></div><div class="c" style="left:536px"></div><div class="c" style="left:586px"></div><div class="c" style="left:653px"></div><div class="c" style="left:713px"></div><div class="c" style="left:816px"></div></div>
<div class="tx" style="right:1125px;top:587px;font-size:12px;transform:scaleX(0.88);transform-origin:100% 0;">73</div>
<div class="a" style="left:269px;top:587px"><svg class="ic" width="14" height="14" viewBox="0 0 14 14"><rect x="1.6" y="4.6" width="7.8" height="5.3" fill="none" stroke="#000" stroke-width="1.2"/><path d="M4 7H7" stroke="#aaa" stroke-width="0.6"/><path d="M9.5 1.6L10.3 3.5L12.2 4.3L10.3 5.1L9.5 7L8.7 5.1L6.8 4.3L8.7 3.5Z" fill="#f00000"/></svg></div>
<div class="tx" style="left:284px;top:587px;font-size:12px;transform:scaleX(0.88);transform-origin:0 0;">add dst to address list</div>
<div class="tx" style="left:408px;top:587px;font-size:12px;transform:scaleX(0.88);transform-origin:0 0;">output</div>
<div class="tx" style="left:599px;top:587px;font-size:12px;transform:scaleX(0.88);transform-origin:0 0;">6 (tcp)</div>
<div class="tx" style="right:435px;top:587px;font-size:12px;transform:scaleX(0.88);transform-origin:100% 0;">0 B</div>
<div class="tx" style="right:332px;top:587px;font-size:12px;transform:scaleX(0.88);transform-origin:100% 0;">0</div>
<div class="r" style="top:602px"></div>
<div class="tx" style="left:236px;top:602px;font-size:12px;transform:scaleX(0.88);transform-origin:0 0;">;;; drop ssh brute forcers</div>
<div class="r" style="top:617px"><div class="c" style="left:23px"></div><div class="c" style="left:45px"></div><div class="c" style="left:185px"></div><div class="c" style="left:236px"></div><div class="c" style="left:306px"></div><div class="c" style="left:376px"></div><div class="c" style="left:416px"></div><div class="c" style="left:476px"></div><div class="c" style="left:536px"></div><div class="c" style="left:586px"></div><div class="c" style="left:653px"></div><div class="c" style="left:713px"></div><div class="c" style="left:816px"></div></div>
<div class="tx" style="right:1125px;top:617px;font-size:12px;transform:scaleX(0.88);transform-origin:100% 0;">74</div>
<div class="a" style="left:269px;top:617px"><svg class="ic" width="14" height="14" viewBox="0 0 14 14"><defs><linearGradient id="xg" x1="0" y1="0" x2="0" y2="1"><stop offset="0" stop-color="#e85a5a"/><stop offset="0.45" stop-color="#d42020"/><stop offset="1" stop-color="#c01010"/></linearGradient></defs><path d="M1 3.5L3.5 1L7 4.5L10.5 1L13 3.5L9.5 7L13 10.5L10.5 13L7 9.5L3.5 13L1 10.5L4.5 7Z" fill="url(#xg)"/></svg></div>
<div class="tx" style="left:284px;top:617px;font-size:12px;transform:scaleX(0.88);transform-origin:0 0;">drop</div>
<div class="tx" style="left:408px;top:617px;font-size:12px;transform:scaleX(0.88);transform-origin:0 0;">input</div>
<div class="tx" style="left:599px;top:617px;font-size:12px;transform:scaleX(0.88);transform-origin:0 0;">6 (tcp)</div>
<div class="tx" style="left:699px;top:617px;font-size:12px;transform:scaleX(0.88);transform-origin:0 0;">22</div>
<div class="tx" style="right:435px;top:617px;font-size:12px;transform:scaleX(0.88);transform-origin:100% 0;">13.2 KiB</div>
<div class="tx" style="right:332px;top:617px;font-size:12px;transform:scaleX(0.88);transform-origin:100% 0;">225</div>
<div class="r" style="top:632px"><div class="c" style="left:23px"></div><div class="c" style="left:45px"></div><div class="c" style="left:185px"></div><div class="c" style="left:236px"></div><div class="c" style="left:306px"></div><div class="c" style="left:376px"></div><div class="c" style="left:416px"></div><div class="c" style="left:476px"></div><div class="c" style="left:536px"></div><div class="c" style="left:586px"></div><div class="c" style="left:653px"></div><div class="c" style="left:713px"></div><div class="c" style="left:816px"></div></div>
<div class="tx" style="right:1125px;top:632px;font-size:12px;transform:scaleX(0.88);transform-origin:100% 0;">75</div>
<div class="a" style="left:269px;top:632px"><svg class="ic" width="14" height="14" viewBox="0 0 14 14"><rect x="1.6" y="4.6" width="7.8" height="5.3" fill="none" stroke="#000" stroke-width="1.2"/><path d="M4 7H7" stroke="#aaa" stroke-width="0.6"/><path d="M9.5 1.6L10.3 3.5L12.2 4.3L10.3 5.1L9.5 7L8.7 5.1L6.8 4.3L8.7 3.5Z" fill="#f00000"/></svg></div>
<div class="tx" style="left:284px;top:632px;font-size:12px;transform:scaleX(0.88);transform-origin:0 0;">add src to address list</div>
<div class="tx" style="left:408px;top:632px;font-size:12px;transform:scaleX(0.88);transform-origin:0 0;">input</div>
<div class="tx" style="left:599px;top:632px;font-size:12px;transform:scaleX(0.88);transform-origin:0 0;">6 (tcp)</div>
<div class="tx" style="left:699px;top:632px;font-size:12px;transform:scaleX(0.88);transform-origin:0 0;">22</div>
<div class="tx" style="right:435px;top:632px;font-size:12px;transform:scaleX(0.88);transform-origin:100% 0;">1380 B</div>
<div class="tx" style="right:332px;top:632px;font-size:12px;transform:scaleX(0.88);transform-origin:100% 0;">23</div>
<div class="r" style="top:647px"><div class="c" style="left:23px"></div><div class="c" style="left:45px"></div><div class="c" style="left:185px"></div><div class="c" style="left:236px"></div><div class="c" style="left:306px"></div><div class="c" style="left:376px"></div><div class="c" style="left:416px"></div><div class="c" style="left:476px"></div><div class="c" style="left:536px"></div><div class="c" style="left:586px"></div><div class="c" style="left:653px"></div><div class="c" style="left:713px"></div><div class="c" style="left:816px"></div></div>
<div class="tx" style="right:1125px;top:647px;font-size:12px;transform:scaleX(0.88);transform-origin:100% 0;">76</div>
<div class="a" style="left:269px;top:647px"><svg class="ic" width="14" height="14" viewBox="0 0 14 14"><rect x="1.6" y="4.6" width="7.8" height="5.3" fill="none" stroke="#000" stroke-width="1.2"/><path d="M4 7H7" stroke="#aaa" stroke-width="0.6"/><path d="M9.5 1.6L10.3 3.5L12.2 4.3L10.3 5.1L9.5 7L8.7 5.1L6.8 4.3L8.7 3.5Z" fill="#f00000"/></svg></div>
<div class="tx" style="left:284px;top:647px;font-size:12px;transform:scaleX(0.88);transform-origin:0 0;">add src to address list</div>
<div class="tx" style="left:408px;top:647px;font-size:12px;transform:scaleX(0.88);transform-origin:0 0;">input</div>
<div class="tx" style="left:599px;top:647px;font-size:12px;transform:scaleX(0.88);transform-origin:0 0;">6 (tcp)</div>
<div class="tx" style="left:699px;top:647px;font-size:12px;transform:scaleX(0.88);transform-origin:0 0;">22</div>
<div class="tx" style="right:435px;top:647px;font-size:12px;transform:scaleX(0.88);transform-origin:100% 0;">5.1 KiB</div>
<div class="tx" style="right:332px;top:647px;font-size:12px;transform:scaleX(0.88);transform-origin:100% 0;">87</div>
<div class="r" style="top:662px"><div class="c" style="left:23px"></div><div class="c" style="left:45px"></div><div class="c" style="left:185px"></div><div class="c" style="left:236px"></div><div class="c" style="left:306px"></div><div class="c" style="left:376px"></div><div class="c" style="left:416px"></div><div class="c" style="left:476px"></div><div class="c" style="left:536px"></div><div class="c" style="left:586px"></div><div class="c" style="left:653px"></div><div class="c" style="left:713px"></div><div class="c" style="left:816px"></div></div>
<div class="tx" style="right:1125px;top:662px;font-size:12px;transform:scaleX(0.88);transform-origin:100% 0;">77</div>
<div class="a" style="left:269px;top:662px"><svg class="ic" width="14" height="14" viewBox="0 0 14 14"><rect x="1.6" y="4.6" width="7.8" height="5.3" fill="none" stroke="#000" stroke-width="1.2"/><path d="M4 7H7" stroke="#aaa" stroke-width="0.6"/><path d="M9.5 1.6L10.3 3.5L12.2 4.3L10.3 5.1L9.5 7L8.7 5.1L6.8 4.3L8.7 3.5Z" fill="#f00000"/></svg></div>
<div class="tx" style="left:284px;top:662px;font-size:12px;transform:scaleX(0.88);transform-origin:0 0;">add src to address list</div>
<div class="tx" style="left:408px;top:662px;font-size:12px;transform:scaleX(0.88);transform-origin:0 0;">input</div>
<div class="tx" style="left:599px;top:662px;font-size:12px;transform:scaleX(0.88);transform-origin:0 0;">6 (tcp)</div>
<div class="tx" style="left:699px;top:662px;font-size:12px;transform:scaleX(0.88);transform-origin:0 0;">22</div>
<div class="tx" style="right:435px;top:662px;font-size:12px;transform:scaleX(0.88);transform-origin:100% 0;">9.1 KiB</div>
<div class="tx" style="right:332px;top:662px;font-size:12px;transform:scaleX(0.88);transform-origin:100% 0;">156</div>
<div class="r" style="top:677px"><div class="c" style="left:23px"></div><div class="c" style="left:45px"></div><div class="c" style="left:185px"></div><div class="c" style="left:236px"></div><div class="c" style="left:306px"></div><div class="c" style="left:376px"></div><div class="c" style="left:416px"></div><div class="c" style="left:476px"></div><div class="c" style="left:536px"></div><div class="c" style="left:586px"></div><div class="c" style="left:653px"></div><div class="c" style="left:713px"></div><div class="c" style="left:816px"></div></div>
<div class="tx" style="right:1125px;top:677px;font-size:12px;transform:scaleX(0.88);transform-origin:100% 0;">78</div>
<div class="a" style="left:269px;top:677px"><svg class="ic" width="14" height="14" viewBox="0 0 14 14"><rect x="1.6" y="4.6" width="7.8" height="5.3" fill="none" stroke="#000" stroke-width="1.2"/><path d="M4 7H7" stroke="#aaa" stroke-width="0.6"/><path d="M9.5 1.6L10.3 3.5L12.2 4.3L10.3 5.1L9.5 7L8.7 5.1L6.8 4.3L8.7 3.5Z" fill="#f00000"/></svg></div>
<div class="tx" style="left:284px;top:677px;font-size:12px;transform:scaleX(0.88);transform-origin:0 0;">add src to address list</div>
<div class="tx" style="left:408px;top:677px;font-size:12px;transform:scaleX(0.88);transform-origin:0 0;">input</div>
<div class="tx" style="left:599px;top:677px;font-size:12px;transform:scaleX(0.88);transform-origin:0 0;">6 (tcp)</div>
<div class="tx" style="left:699px;top:677px;font-size:12px;transform:scaleX(0.88);transform-origin:0 0;">22</div>
<div class="tx" style="right:435px;top:677px;font-size:12px;transform:scaleX(0.88);transform-origin:100% 0;">21.1 KiB</div>
<div class="tx" style="right:332px;top:677px;font-size:12px;transform:scaleX(0.88);transform-origin:100% 0;">411</div>
<div class="r" style="top:692px"></div>
<div class="tx" style="left:236px;top:692px;font-size:12px;transform:scaleX(0.88);transform-origin:0 0;">;;; drop ssh brute downstream</div>
<div class="r" style="top:707px"><div class="c" style="left:23px"></div><div class="c" style="left:45px"></div><div class="c" style="left:185px"></div><div class="c" style="left:236px"></div><div class="c" style="left:306px"></div><div class="c" style="left:376px"></div><div class="c" style="left:416px"></div><div class="c" style="left:476px"></div><div class="c" style="left:536px"></div><div class="c" style="left:586px"></div><div class="c" style="left:653px"></div><div class="c" style="left:713px"></div><div class="c" style="left:816px"></div></div>
<div class="tx" style="right:1125px;top:707px;font-size:12px;transform:scaleX(0.88);transform-origin:100% 0;">79</div>
<div class="a" style="left:269px;top:707px"><svg class="ic" width="14" height="14" viewBox="0 0 14 14"><defs><linearGradient id="xg" x1="0" y1="0" x2="0" y2="1"><stop offset="0" stop-color="#e85a5a"/><stop offset="0.45" stop-color="#d42020"/><stop offset="1" stop-color="#c01010"/></linearGradient></defs><path d="M1 3.5L3.5 1L7 4.5L10.5 1L13 3.5L9.5 7L13 10.5L10.5 13L7 9.5L3.5 13L1 10.5L4.5 7Z" fill="url(#xg)"/></svg></div>
<div class="tx" style="left:284px;top:707px;font-size:12px;transform:scaleX(0.88);transform-origin:0 0;">drop</div>
<div class="tx" style="left:408px;top:707px;font-size:12px;transform:scaleX(0.88);transform-origin:0 0;">forward</div>
<div class="tx" style="left:599px;top:707px;font-size:12px;transform:scaleX(0.88);transform-origin:0 0;">6 (tcp)</div>
<div class="tx" style="left:699px;top:707px;font-size:12px;transform:scaleX(0.88);transform-origin:0 0;">22</div>
<div class="tx" style="right:435px;top:707px;font-size:12px;transform:scaleX(0.88);transform-origin:100% 0;">0 B</div>
<div class="tx" style="right:332px;top:707px;font-size:12px;transform:scaleX(0.88);transform-origin:100% 0;">0</div>
<div class="r" style="top:722px"><div class="c" style="left:23px"></div><div class="c" style="left:45px"></div><div class="c" style="left:185px"></div><div class="c" style="left:236px"></div><div class="c" style="left:306px"></div><div class="c" style="left:376px"></div><div class="c" style="left:416px"></div><div class="c" style="left:476px"></div><div class="c" style="left:536px"></div><div class="c" style="left:586px"></div><div class="c" style="left:653px"></div><div class="c" style="left:713px"></div><div class="c" style="left:816px"></div></div>
<div class="tx" style="right:1125px;top:722px;font-size:12px;transform:scaleX(0.88);transform-origin:100% 0;">80</div>
<div class="a" style="left:269px;top:722px"><svg class="ic" width="14" height="14" viewBox="0 0 14 14"><defs><linearGradient id="xg" x1="0" y1="0" x2="0" y2="1"><stop offset="0" stop-color="#e85a5a"/><stop offset="0.45" stop-color="#d42020"/><stop offset="1" stop-color="#c01010"/></linearGradient></defs><path d="M1 3.5L3.5 1L7 4.5L10.5 1L13 3.5L9.5 7L13 10.5L10.5 13L7 9.5L3.5 13L1 10.5L4.5 7Z" fill="url(#xg)"/></svg></div>
<div class="tx" style="left:284px;top:722px;font-size:12px;transform:scaleX(0.88);transform-origin:0 0;">drop</div>
<div class="tx" style="left:408px;top:722px;font-size:12px;transform:scaleX(0.88);transform-origin:0 0;">forward</div>
<div class="tx" style="left:529px;top:722px;font-size:12px;transform:scaleX(0.88);transform-origin:0 0;">52.6.198.210</div>
<div class="tx" style="left:599px;top:722px;font-size:12px;transform:scaleX(0.88);transform-origin:0 0;">6 (tcp)</div>
<div class="tx" style="right:435px;top:722px;font-size:12px;transform:scaleX(0.88);transform-origin:100% 0;">0 B</div>
<div class="tx" style="right:332px;top:722px;font-size:12px;transform:scaleX(0.88);transform-origin:100% 0;">0</div>
<div class="tx" style="left:222px;top:745px;font-size:12px;transform:scaleX(0.85);transform-origin:0 0;">81 items</div>
</body></html>
